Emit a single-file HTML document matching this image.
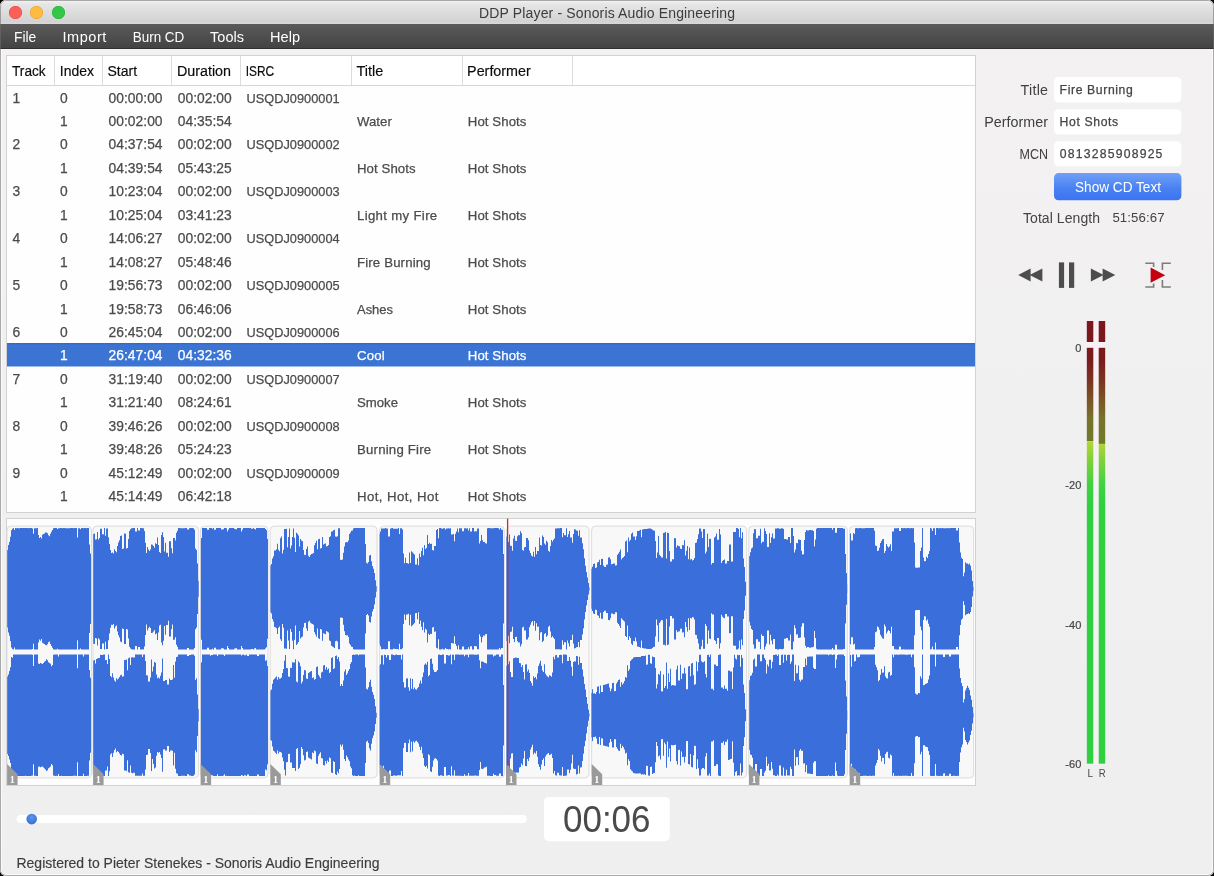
<!DOCTYPE html>
<html><head><meta charset="utf-8"><title>DDP Player - Sonoris Audio Engineering</title>
<style>
html,body{margin:0;padding:0;}
.abs{position:absolute;}
body{width:1214px;height:876px;overflow:hidden;background:#000;position:relative;font-family:"Liberation Sans",sans-serif;}
#win{position:absolute;left:0;top:0;width:1214px;height:876px;border-radius:6px;overflow:hidden;background:#f1efef;}
#txt{position:absolute;left:0;top:0;width:1214px;height:876px;will-change:transform;font-family:"Liberation Sans",sans-serif;}
#titlebar{left:0;top:0;width:1214px;height:24px;background:linear-gradient(#efefef 0,#efefef 2px,#e6e6e6 4px,#d2d2d2 22px,#dadada 23px,#d6d6d6 24px);}
#menubar{left:0;top:24px;width:1214px;height:25px;background:linear-gradient(#5b5b5b,#434343);border-bottom:1px solid #2f2f2f;box-sizing:border-box;}
.tl{width:13px;height:13px;border-radius:50%;top:6px;}
#content{left:0;top:49px;width:1214px;height:827px;background:linear-gradient(#f3f1f1,#f1f0f0 50%,#efeff0);}
#table{left:6px;top:55px;width:970px;height:458px;background:#fefefe;border:1px solid #d2d2d2;box-sizing:border-box;}
#thead{left:7px;top:56px;width:968px;height:30px;background:#fff;border-bottom:1px solid #d6d6d6;box-sizing:border-box;}
.csep{top:56px;width:1px;height:29px;background:#dcdcdc;}
#wavepanel{left:6px;top:518px;width:970px;height:268px;background:#fdfdfd;border:1px solid #d2d2d2;box-sizing:border-box;}
</style></head><body>
<div id="win">

<div class="abs" id="titlebar"></div>
<div class="abs tl" style="left:9px;background:#fc5f57;box-shadow:inset 0 0 0 0.5px #e2463f"></div>
<div class="abs tl" style="left:30.2px;background:#fdbc40;box-shadow:inset 0 0 0 0.5px #e0a033"></div>
<div class="abs tl" style="left:51.5px;background:#33c748;box-shadow:inset 0 0 0 0.5px #27aa35"></div>

<div class="abs" id="menubar"></div>





<div class="abs" id="content"></div>
<div class="abs" id="table"></div><div class="abs" id="thead"></div>
<div class="abs csep" style="left:54px"></div>
<div class="abs csep" style="left:102px"></div>
<div class="abs csep" style="left:171px"></div>
<div class="abs csep" style="left:240px"></div>
<div class="abs csep" style="left:351px"></div>
<div class="abs csep" style="left:461.5px"></div>
<div class="abs csep" style="left:572px"></div>







<svg class="abs" style="left:0;top:0" width="1214" height="876"><rect x="7" y="343.1" width="968" height="23.4" fill="#3b74d3"/><rect x="7" y="343.1" width="968" height="1.1" fill="#3266c8"/></svg>


























































































<div class="abs" id="wavepanel"></div>
<svg class="abs" style="left:0;top:0" width="1214" height="876" viewBox="0 0 1214 876">
<rect x="7.0" y="526.1" width="84.5" height="251.8" rx="4" fill="#f8f8f8" stroke="#dcdcdc" stroke-width="1"/>
<rect x="93.0" y="526.1" width="105.6" height="251.8" rx="4" fill="#f8f8f8" stroke="#dcdcdc" stroke-width="1"/>
<rect x="200.5" y="526.1" width="67.5" height="251.8" rx="4" fill="#f8f8f8" stroke="#dcdcdc" stroke-width="1"/>
<rect x="270.2" y="526.1" width="106.8" height="251.8" rx="4" fill="#f8f8f8" stroke="#dcdcdc" stroke-width="1"/>
<rect x="379.6" y="526.1" width="124.7" height="251.8" rx="4" fill="#f8f8f8" stroke="#dcdcdc" stroke-width="1"/>
<rect x="506.6" y="526.1" width="82.4" height="251.8" rx="4" fill="#f8f8f8" stroke="#dcdcdc" stroke-width="1"/>
<rect x="591.6" y="526.1" width="155.0" height="251.8" rx="4" fill="#f8f8f8" stroke="#dcdcdc" stroke-width="1"/>
<rect x="748.8" y="526.1" width="98.5" height="251.8" rx="4" fill="#f8f8f8" stroke="#dcdcdc" stroke-width="1"/>
<rect x="849.6" y="526.1" width="124.0" height="251.8" rx="4" fill="#f8f8f8" stroke="#dcdcdc" stroke-width="1"/>
<path fill="#396edb" d="M7.2 588.8V550.1H8.0V545.0H9.0V541.9H10.0V536.7H11.0V530.2H12.0V528.7H13.0V528.1H14.0V530.1H15.0V528.1H16.0V528.2H17.0V528.1H18.0V528.2H19.0V528.2H20.0V528.0H21.0V528.1H22.0V528.1H23.0V528.1H24.0V528.1H25.0V528.1H26.0V528.1H27.0V528.1H28.0V528.2H29.0V528.0H30.0V528.1H31.0V528.1H32.0V528.6H33.0V533.8H34.0V528.2H35.0V528.2H36.0V528.2H37.0V528.1H38.0V535.0H39.0V538.0H40.0V536.9H41.0V538.5H42.0V534.8H43.0V534.0H44.0V533.5H45.0V532.6H46.0V532.4H47.0V533.3H48.0V535.3H49.0V536.2H50.0V533.7H51.0V531.7H52.0V529.9H53.0V528.2H54.0V528.1H55.0V528.1H56.0V528.1H57.0V528.9H58.0V528.2H59.0V528.2H60.0V528.1H61.0V528.1H62.0V528.2H63.0V528.1H64.0V528.1H65.0V528.2H66.0V528.2H67.0V528.2H68.0V528.2H69.0V528.2H70.0V528.1H71.0V528.1H72.0V528.1H73.0V528.2H74.0V528.1H75.0V528.1H76.0V528.1H77.0V537.4H78.0V528.2H79.0V528.2H80.0V529.2H81.0V528.1H82.0V528.1H83.0V528.2H84.0V528.1H85.0V528.1H86.0V528.2H87.0V528.0H88.0V528.0H89.0V544.6H90.0V553.6H91.0V558.0H91.1V588.8V619.6H91.0V624.0H90.0V633.0H89.0V649.6H88.0V649.6H87.0V649.4H86.0V649.5H85.0V649.5H84.0V649.4H83.0V649.5H82.0V649.5H81.0V648.4H80.0V649.4H79.0V649.4H78.0V640.2H77.0V649.5H76.0V649.5H75.0V649.5H74.0V649.4H73.0V649.5H72.0V649.5H71.0V649.5H70.0V649.4H69.0V649.4H68.0V649.4H67.0V649.4H66.0V649.4H65.0V649.5H64.0V649.5H63.0V649.4H62.0V649.5H61.0V649.5H60.0V649.4H59.0V649.4H58.0V648.7H57.0V649.5H56.0V649.5H55.0V649.5H54.0V649.4H53.0V647.7H52.0V645.9H51.0V643.9H50.0V641.4H49.0V642.3H48.0V644.3H47.0V645.2H46.0V645.0H45.0V644.1H44.0V643.6H43.0V642.8H42.0V639.1H41.0V640.7H40.0V639.6H39.0V642.6H38.0V649.5H37.0V649.4H36.0V649.4H35.0V649.4H34.0V643.8H33.0V649.0H32.0V649.5H31.0V649.5H30.0V649.6H29.0V649.4H28.0V649.5H27.0V649.5H26.0V649.5H25.0V649.5H24.0V649.5H23.0V649.5H22.0V649.5H21.0V649.6H20.0V649.4H19.0V649.4H18.0V649.5H17.0V649.4H16.0V649.5H15.0V647.5H14.0V649.5H13.0V648.9H12.0V647.4H11.0V640.9H10.0V635.7H9.0V632.6H8.0V627.5H7.2ZM93.2 588.8V533.9H94.0V533.5H95.0V539.5H96.0V539.2H97.0V532.1H98.0V539.4H99.0V538.0H100.0V528.7H101.0V528.7H102.0V534.2H103.0V534.2H104.0V528.1H105.0V535.8H106.0V528.6H107.0V528.6H108.0V537.3H109.0V544.1H110.0V549.9H111.0V552.9H112.0V552.5H113.0V553.6H114.0V549.2H115.0V551.0H116.0V552.2H117.0V546.0H118.0V542.4H119.0V540.2H120.0V536.0H121.0V535.4H122.0V549.1H123.0V548.6H124.0V533.6H125.0V533.7H126.0V548.6H127.0V548.1H128.0V539.1H129.0V530.9H130.0V529.2H131.0V528.3H132.0V528.2H133.0V528.1H134.0V528.1H135.0V531.6H136.0V531.6H137.0V528.1H138.0V530.5H139.0V530.5H140.0V528.1H141.0V528.1H142.0V528.3H143.0V528.2H144.0V531.1H145.0V542.7H146.0V553.0H147.0V547.0H148.0V549.4H149.0V550.9H150.0V549.6H151.0V544.5H152.0V544.8H153.0V546.1H154.0V547.7H155.0V543.3H156.0V544.1H157.0V537.6H158.0V545.0H159.0V552.1H160.0V552.9H161.0V535.1H162.0V532.3H163.0V536.9H164.0V551.6H165.0V542.8H166.0V552.7H167.0V552.7H168.0V556.8H169.0V541.2H170.0V541.2H171.0V548.3H172.0V553.2H173.0V537.9H174.0V537.9H175.0V540.4H176.0V532.8H177.0V530.8H178.0V528.1H179.0V528.1H180.0V528.2H181.0V528.2H182.0V528.2H183.0V528.2H184.0V528.2H185.0V528.1H186.0V528.1H187.0V529.6H188.0V529.6H189.0V528.2H190.0V528.1H191.0V528.1H192.0V528.1H193.0V528.2H194.0V529.7H195.0V548.4H196.0V550.0H197.0V563.6H198.0V580.7H198.7V588.8V596.9H198.0V614.0H197.0V627.6H196.0V629.2H195.0V647.9H194.0V649.4H193.0V649.5H192.0V649.5H191.0V649.5H190.0V649.4H189.0V648.0H188.0V648.0H187.0V649.5H186.0V649.5H185.0V649.4H184.0V649.4H183.0V649.4H182.0V649.4H181.0V649.4H180.0V649.5H179.0V649.5H178.0V646.8H177.0V644.8H176.0V637.2H175.0V639.7H174.0V639.7H173.0V624.4H172.0V629.3H171.0V636.4H170.0V636.4H169.0V620.8H168.0V624.9H167.0V624.9H166.0V634.8H165.0V626.0H164.0V640.7H163.0V645.3H162.0V642.5H161.0V624.7H160.0V625.5H159.0V632.6H158.0V640.0H157.0V633.5H156.0V634.3H155.0V629.9H154.0V631.5H153.0V632.8H152.0V633.1H151.0V628.0H150.0V626.7H149.0V628.2H148.0V630.6H147.0V624.6H146.0V634.9H145.0V646.5H144.0V649.4H143.0V649.3H142.0V649.5H141.0V649.5H140.0V647.1H139.0V647.1H138.0V649.5H137.0V646.0H136.0V646.0H135.0V649.5H134.0V649.5H133.0V649.4H132.0V649.3H131.0V648.4H130.0V646.7H129.0V638.5H128.0V629.5H127.0V629.0H126.0V643.9H125.0V644.0H124.0V629.0H123.0V628.5H122.0V642.2H121.0V641.6H120.0V637.4H119.0V635.2H118.0V631.6H117.0V625.4H116.0V626.6H115.0V628.4H114.0V624.0H113.0V625.1H112.0V624.7H111.0V627.7H110.0V633.5H109.0V640.3H108.0V649.0H107.0V649.0H106.0V641.8H105.0V649.5H104.0V643.4H103.0V643.4H102.0V648.9H101.0V648.9H100.0V639.6H99.0V638.2H98.0V645.5H97.0V638.4H96.0V638.1H95.0V644.1H94.0V643.7H93.2ZM200.9 588.8V540.4H201.0V537.9H202.0V528.0H203.0V528.0H204.0V528.1H205.0V528.1H206.0V528.1H207.0V529.8H208.0V529.8H209.0V528.0H210.0V528.1H211.0V528.1H212.0V528.8H213.0V528.1H214.0V529.8H215.0V529.8H216.0V528.1H217.0V528.1H218.0V528.1H219.0V528.1H220.0V528.1H221.0V529.4H222.0V529.4H223.0V529.2H224.0V528.0H225.0V528.1H226.0V528.2H227.0V531.5H228.0V529.5H229.0V528.1H230.0V528.1H231.0V528.0H232.0V528.0H233.0V528.1H234.0V528.8H235.0V529.3H236.0V529.3H237.0V528.1H238.0V528.1H239.0V528.0H240.0V528.0H241.0V531.6H242.0V529.6H243.0V528.1H244.0V528.1H245.0V528.1H246.0V528.1H247.0V528.1H248.0V528.0H249.0V528.0H250.0V528.0H251.0V528.7H252.0V528.7H253.0V528.1H254.0V529.0H255.0V529.5H256.0V528.1H257.0V528.1H258.0V528.1H259.0V528.1H260.0V528.1H261.0V528.1H262.0V528.1H263.0V528.1H264.0V528.1H265.0V529.0H266.0V530.3H267.0V538.9H268.0V588.8V638.7H267.0V647.3H266.0V648.6H265.0V649.5H264.0V649.5H263.0V649.5H262.0V649.5H261.0V649.5H260.0V649.5H259.0V649.5H258.0V649.5H257.0V649.5H256.0V648.1H255.0V648.6H254.0V649.5H253.0V648.9H252.0V648.9H251.0V649.6H250.0V649.6H249.0V649.6H248.0V649.5H247.0V649.5H246.0V649.5H245.0V649.5H244.0V649.5H243.0V648.0H242.0V646.0H241.0V649.6H240.0V649.6H239.0V649.5H238.0V649.5H237.0V648.3H236.0V648.3H235.0V648.8H234.0V649.5H233.0V649.6H232.0V649.6H231.0V649.5H230.0V649.5H229.0V648.1H228.0V646.1H227.0V649.4H226.0V649.5H225.0V649.6H224.0V648.4H223.0V648.2H222.0V648.2H221.0V649.5H220.0V649.5H219.0V649.5H218.0V649.5H217.0V649.5H216.0V647.8H215.0V647.8H214.0V649.5H213.0V648.8H212.0V649.5H211.0V649.5H210.0V649.6H209.0V647.8H208.0V647.8H207.0V649.5H206.0V649.5H205.0V649.5H204.0V649.6H203.0V649.6H202.0V639.7H201.0V637.2H200.9ZM270.4 588.8V565.4H271.0V564.0H272.0V558.6H273.0V556.2H274.0V550.5H275.0V550.4H276.0V549.3H277.0V543.7H278.0V549.8H279.0V551.2H280.0V538.3H281.0V536.5H282.0V553.6H283.0V549.8H284.0V529.1H285.0V529.1H286.0V528.8H287.0V547.2H288.0V537.0H289.0V528.6H290.0V548.6H291.0V545.6H292.0V536.9H293.0V528.4H294.0V537.8H295.0V552.0H296.0V532.7H297.0V533.8H298.0V535.5H299.0V546.5H300.0V539.1H301.0V540.4H302.0V541.2H303.0V550.1H304.0V554.7H305.0V554.9H306.0V549.1H307.0V546.6H308.0V555.8H309.0V556.9H310.0V554.9H311.0V554.1H312.0V553.7H313.0V552.9H314.0V545.3H315.0V543.1H316.0V540.8H317.0V549.2H318.0V539.3H319.0V538.7H320.0V548.6H321.0V548.0H322.0V536.9H323.0V544.4H324.0V543.8H325.0V543.4H326.0V546.6H327.0V545.9H328.0V545.1H329.0V537.0H330.0V536.3H331.0V531.8H332.0V531.2H333.0V530.3H334.0V529.7H335.0V536.4H336.0V536.8H337.0V536.2H338.0V528.3H339.0V528.3H340.0V559.8H341.0V560.0H342.0V559.5H343.0V552.8H344.0V546.4H345.0V542.6H346.0V542.1H347.0V542.3H348.0V540.5H349.0V534.0H350.0V532.6H351.0V530.8H352.0V530.5H353.0V528.4H354.0V528.1H355.0V528.1H356.0V528.1H357.0V528.1H358.0V528.1H359.0V528.1H360.0V528.1H361.0V528.1H362.0V528.1H363.0V528.0H364.0V528.0H365.0V544.1H366.0V562.7H367.0V563.5H368.0V562.1H369.0V555.6H370.0V555.0H371.0V561.2H372.0V566.0H373.0V568.7H374.0V573.1H375.0V580.2H376.0V585.9H376.7V588.8V591.7H376.0V597.4H375.0V604.5H374.0V608.9H373.0V611.6H372.0V616.4H371.0V622.6H370.0V622.0H369.0V615.5H368.0V614.1H367.0V614.9H366.0V633.5H365.0V649.6H364.0V649.6H363.0V649.5H362.0V649.5H361.0V649.5H360.0V649.5H359.0V649.5H358.0V649.5H357.0V649.5H356.0V649.5H355.0V649.5H354.0V649.2H353.0V647.1H352.0V646.8H351.0V645.0H350.0V643.6H349.0V637.1H348.0V635.3H347.0V635.5H346.0V635.0H345.0V631.2H344.0V624.8H343.0V618.1H342.0V617.6H341.0V617.8H340.0V649.3H339.0V649.3H338.0V641.4H337.0V640.8H336.0V641.2H335.0V647.9H334.0V647.3H333.0V646.4H332.0V645.8H331.0V641.3H330.0V640.6H329.0V632.5H328.0V631.7H327.0V631.0H326.0V634.2H325.0V633.8H324.0V633.2H323.0V640.7H322.0V629.6H321.0V629.0H320.0V638.9H319.0V638.3H318.0V628.4H317.0V636.8H316.0V634.5H315.0V632.3H314.0V624.7H313.0V623.9H312.0V623.5H311.0V622.7H310.0V620.7H309.0V621.8H308.0V631.0H307.0V628.5H306.0V622.7H305.0V622.9H304.0V627.5H303.0V636.4H302.0V637.2H301.0V638.5H300.0V631.1H299.0V642.1H298.0V643.8H297.0V644.9H296.0V625.6H295.0V639.8H294.0V649.2H293.0V640.7H292.0V632.0H291.0V629.0H290.0V649.0H289.0V640.6H288.0V630.4H287.0V648.8H286.0V648.5H285.0V648.5H284.0V627.8H283.0V624.0H282.0V641.1H281.0V639.3H280.0V626.4H279.0V627.8H278.0V633.9H277.0V628.3H276.0V627.2H275.0V627.1H274.0V621.4H273.0V619.0H272.0V613.6H271.0V612.2H270.4ZM379.6 588.8V533.9H380.0V531.4H381.0V528.4H382.0V528.4H383.0V528.5H384.0V528.5H385.0V528.1H386.0V528.6H387.0V528.6H388.0V536.4H389.0V536.4H390.0V528.4H391.0V528.2H392.0V528.1H393.0V528.8H394.0V528.8H395.0V528.7H396.0V528.7H397.0V528.7H398.0V528.0H399.0V533.9H400.0V528.3H401.0V528.3H402.0V529.4H403.0V553.6H404.0V563.2H405.0V557.7H406.0V563.0H407.0V563.2H408.0V563.8H409.0V552.4H410.0V562.9H411.0V551.3H412.0V552.3H413.0V553.4H414.0V554.5H415.0V564.4H416.0V564.5H417.0V558.3H418.0V565.3H419.0V553.5H420.0V557.1H421.0V550.9H422.0V547.7H423.0V555.3H424.0V545.1H425.0V548.9H426.0V547.8H427.0V535.1H428.0V543.9H429.0V542.7H430.0V543.9H431.0V543.7H432.0V550.1H433.0V550.5H434.0V545.9H435.0V546.1H436.0V529.9H437.0V529.0H438.0V538.3H439.0V528.1H440.0V528.1H441.0V528.4H442.0V528.8H443.0V528.2H444.0V528.2H445.0V529.6H446.0V528.5H447.0V528.5H448.0V528.2H449.0V528.6H450.0V528.2H451.0V534.5H452.0V534.4H453.0V534.1H454.0V541.3H455.0V533.7H456.0V531.6H457.0V528.4H458.0V532.3H459.0V528.2H460.0V528.2H461.0V528.2H462.0V531.2H463.0V531.2H464.0V528.2H465.0V528.2H466.0V528.4H467.0V528.3H468.0V530.4H469.0V528.3H470.0V531.4H471.0V531.4H472.0V528.0H473.0V528.0H474.0V531.5H475.0V531.3H476.0V531.3H477.0V528.4H478.0V528.4H479.0V543.4H480.0V541.1H481.0V535.1H482.0V540.3H483.0V542.0H484.0V541.9H485.0V543.3H486.0V543.6H487.0V528.2H488.0V528.1H489.0V528.0H490.0V528.2H491.0V528.2H492.0V528.2H493.0V528.2H494.0V528.0H495.0V528.0H496.0V528.1H497.0V528.0H498.0V528.2H499.0V529.6H500.0V528.1H501.0V529.7H502.0V529.7H503.0V554.0H504.0V588.8V623.6H503.0V647.9H502.0V647.9H501.0V649.5H500.0V648.0H499.0V649.4H498.0V649.6H497.0V649.5H496.0V649.6H495.0V649.6H494.0V649.4H493.0V649.4H492.0V649.4H491.0V649.4H490.0V649.6H489.0V649.5H488.0V649.4H487.0V634.0H486.0V634.3H485.0V635.7H484.0V635.6H483.0V637.3H482.0V642.5H481.0V636.5H480.0V634.2H479.0V649.2H478.0V649.2H477.0V646.3H476.0V646.3H475.0V646.1H474.0V649.6H473.0V649.6H472.0V646.2H471.0V646.2H470.0V649.3H469.0V647.2H468.0V649.3H467.0V649.2H466.0V649.4H465.0V649.4H464.0V646.4H463.0V646.4H462.0V649.4H461.0V649.4H460.0V649.4H459.0V645.3H458.0V649.2H457.0V646.0H456.0V643.9H455.0V636.3H454.0V643.5H453.0V643.2H452.0V643.1H451.0V649.4H450.0V649.0H449.0V649.4H448.0V649.1H447.0V649.1H446.0V648.0H445.0V649.4H444.0V649.4H443.0V648.8H442.0V649.2H441.0V649.5H440.0V649.5H439.0V639.3H438.0V648.6H437.0V647.7H436.0V631.5H435.0V631.7H434.0V627.1H433.0V627.5H432.0V633.9H431.0V633.7H430.0V634.9H429.0V633.7H428.0V642.5H427.0V629.8H426.0V628.7H425.0V632.5H424.0V622.3H423.0V629.9H422.0V626.7H421.0V620.5H420.0V624.1H419.0V612.3H418.0V619.3H417.0V613.1H416.0V613.2H415.0V623.1H414.0V624.2H413.0V625.3H412.0V626.3H411.0V614.7H410.0V625.2H409.0V613.8H408.0V614.4H407.0V614.6H406.0V619.9H405.0V614.4H404.0V624.0H403.0V648.2H402.0V649.3H401.0V649.3H400.0V643.7H399.0V649.6H398.0V648.9H397.0V648.9H396.0V648.9H395.0V648.8H394.0V648.8H393.0V649.5H392.0V649.4H391.0V649.2H390.0V641.2H389.0V641.2H388.0V649.0H387.0V649.0H386.0V649.5H385.0V649.1H384.0V649.1H383.0V649.2H382.0V649.2H381.0V646.2H380.0V643.7H379.6ZM506.4 588.8V536.5H507.0V537.2H508.0V541.9H509.0V534.4H510.0V545.6H511.0V546.1H512.0V550.8H513.0V538.5H514.0V535.7H515.0V540.7H516.0V540.9H517.0V536.3H518.0V535.1H519.0V535.2H520.0V531.2H521.0V533.3H522.0V550.1H523.0V550.8H524.0V547.2H525.0V547.0H526.0V538.1H527.0V538.0H528.0V540.3H529.0V550.4H530.0V552.9H531.0V555.4H532.0V556.5H533.0V551.8H534.0V556.7H535.0V546.9H536.0V554.3H537.0V550.9H538.0V551.0H539.0V537.4H540.0V545.1H541.0V545.5H542.0V535.6H543.0V536.9H544.0V543.5H545.0V544.7H546.0V540.8H547.0V542.2H548.0V550.8H549.0V551.8H550.0V546.1H551.0V540.1H552.0V541.4H553.0V539.8H554.0V538.6H555.0V528.4H556.0V528.4H557.0V528.3H558.0V528.3H559.0V528.3H560.0V528.1H561.0V528.1H562.0V537.3H563.0V532.9H564.0V535.3H565.0V535.3H566.0V528.2H567.0V537.1H568.0V534.3H569.0V531.1H570.0V537.5H571.0V537.5H572.0V542.8H573.0V533.9H574.0V529.2H575.0V529.5H576.0V530.4H577.0V530.7H578.0V535.7H579.0V530.3H580.0V537.5H581.0V537.6H582.0V543.2H583.0V549.3H584.0V558.2H585.0V565.7H586.0V572.1H587.0V577.6H588.0V583.0H589.0V587.2H589.5V588.8V590.4H589.0V594.6H588.0V600.0H587.0V605.5H586.0V611.9H585.0V619.4H584.0V628.3H583.0V634.4H582.0V640.0H581.0V640.1H580.0V647.3H579.0V641.9H578.0V646.9H577.0V647.2H576.0V648.1H575.0V648.4H574.0V643.7H573.0V634.8H572.0V640.1H571.0V640.1H570.0V646.5H569.0V643.3H568.0V640.5H567.0V649.4H566.0V642.3H565.0V642.3H564.0V644.7H563.0V640.3H562.0V649.5H561.0V649.5H560.0V649.3H559.0V649.3H558.0V649.3H557.0V649.2H556.0V649.2H555.0V639.0H554.0V637.8H553.0V636.2H552.0V637.5H551.0V631.5H550.0V625.8H549.0V626.8H548.0V635.4H547.0V636.8H546.0V632.9H545.0V634.1H544.0V640.7H543.0V642.0H542.0V632.1H541.0V632.5H540.0V640.2H539.0V626.6H538.0V626.7H537.0V623.3H536.0V630.7H535.0V620.9H534.0V625.8H533.0V621.1H532.0V622.2H531.0V624.7H530.0V627.2H529.0V637.3H528.0V639.6H527.0V639.5H526.0V630.6H525.0V630.4H524.0V626.8H523.0V627.5H522.0V644.3H521.0V646.4H520.0V642.4H519.0V642.5H518.0V641.3H517.0V636.7H516.0V636.9H515.0V641.9H514.0V639.1H513.0V626.8H512.0V631.5H511.0V632.0H510.0V643.2H509.0V635.7H508.0V640.4H507.0V641.1H506.4ZM591.4 588.8V568.8H592.0V566.7H593.0V564.1H594.0V563.6H595.0V567.9H596.0V567.6H597.0V562.4H598.0V561.9H599.0V559.7H600.0V564.9H601.0V558.9H602.0V558.8H603.0V565.5H604.0V566.8H605.0V566.9H606.0V564.7H607.0V564.5H608.0V557.5H609.0V557.3H610.0V559.3H611.0V564.2H612.0V564.0H613.0V563.4H614.0V563.5H615.0V565.4H616.0V565.3H617.0V554.8H618.0V553.5H619.0V551.8H620.0V549.5H621.0V559.4H622.0V558.1H623.0V557.2H624.0V556.0H625.0V541.6H626.0V540.5H627.0V552.2H628.0V537.5H629.0V541.3H630.0V539.7H631.0V533.8H632.0V532.5H633.0V536.6H634.0V536.4H635.0V540.0H636.0V536.2H637.0V531.1H638.0V530.9H639.0V530.5H640.0V529.8H641.0V537.2H642.0V529.5H643.0V529.3H644.0V529.1H645.0V529.0H646.0V528.9H647.0V528.7H648.0V528.6H649.0V528.5H650.0V528.5H651.0V528.9H652.0V529.7H653.0V530.5H654.0V530.8H655.0V541.0H656.0V558.0H657.0V552.4H658.0V535.9H659.0V554.7H660.0V556.0H661.0V557.6H662.0V557.4H663.0V532.9H664.0V532.8H665.0V532.1H666.0V558.6H667.0V532.7H668.0V533.0H669.0V551.1H670.0V561.5H671.0V561.6H672.0V559.2H673.0V559.3H674.0V538.0H675.0V538.2H676.0V547.4H677.0V545.3H678.0V546.1H679.0V546.3H680.0V548.8H681.0V548.9H682.0V545.1H683.0V545.3H684.0V540.3H685.0V555.5H686.0V550.7H687.0V546.0H688.0V559.3H689.0V547.6H690.0V559.6H691.0V559.1H692.0V560.5H693.0V560.1H694.0V558.0H695.0V542.9H696.0V542.5H697.0V538.9H698.0V534.2H699.0V528.4H700.0V528.4H701.0V531.4H702.0V537.9H703.0V528.9H704.0V528.9H705.0V553.5H706.0V551.6H707.0V533.8H708.0V547.1H709.0V539.1H710.0V538.7H711.0V564.4H712.0V563.1H713.0V563.1H714.0V537.5H715.0V536.6H716.0V533.6H717.0V539.7H718.0V539.7H719.0V529.0H720.0V534.4H721.0V562.9H722.0V560.9H723.0V559.9H724.0V559.4H725.0V563.6H726.0V563.6H727.0V561.0H728.0V561.1H729.0V544.4H730.0V544.6H731.0V561.4H732.0V561.4H733.0V532.0H734.0V531.9H735.0V531.9H736.0V528.1H737.0V528.1H738.0V529.0H739.0V537.2H740.0V528.0H741.0V538.2H742.0V532.3H743.0V558.6H744.0V567.1H745.0V581.8H746.0V588.8V595.8H745.0V610.5H744.0V619.0H743.0V645.3H742.0V639.4H741.0V649.6H740.0V640.4H739.0V648.6H738.0V649.5H737.0V649.5H736.0V645.7H735.0V645.7H734.0V645.6H733.0V616.2H732.0V616.2H731.0V633.0H730.0V633.2H729.0V616.5H728.0V616.6H727.0V614.0H726.0V614.0H725.0V618.2H724.0V617.7H723.0V616.7H722.0V614.7H721.0V643.2H720.0V648.6H719.0V637.9H718.0V637.9H717.0V644.0H716.0V641.0H715.0V640.1H714.0V614.5H713.0V614.5H712.0V613.2H711.0V638.9H710.0V638.5H709.0V630.5H708.0V643.8H707.0V626.0H706.0V624.1H705.0V648.7H704.0V648.7H703.0V639.7H702.0V646.2H701.0V649.2H700.0V649.2H699.0V643.4H698.0V638.7H697.0V635.1H696.0V634.7H695.0V619.6H694.0V617.5H693.0V617.1H692.0V618.5H691.0V618.0H690.0V630.0H689.0V618.3H688.0V631.6H687.0V626.9H686.0V622.1H685.0V637.3H684.0V632.3H683.0V632.5H682.0V628.7H681.0V628.8H680.0V631.3H679.0V631.5H678.0V632.3H677.0V630.2H676.0V639.4H675.0V639.6H674.0V618.3H673.0V618.4H672.0V616.0H671.0V616.1H670.0V626.5H669.0V644.6H668.0V644.9H667.0V619.0H666.0V645.5H665.0V644.8H664.0V644.7H663.0V620.2H662.0V620.0H661.0V621.6H660.0V622.9H659.0V641.7H658.0V625.2H657.0V619.6H656.0V636.6H655.0V646.8H654.0V647.1H653.0V647.9H652.0V648.7H651.0V649.1H650.0V649.1H649.0V649.0H648.0V648.9H647.0V648.7H646.0V648.6H645.0V648.5H644.0V648.3H643.0V648.1H642.0V640.4H641.0V647.8H640.0V647.1H639.0V646.7H638.0V646.5H637.0V641.4H636.0V637.6H635.0V641.2H634.0V641.0H633.0V645.1H632.0V643.8H631.0V637.9H630.0V636.3H629.0V640.1H628.0V625.4H627.0V637.1H626.0V636.0H625.0V621.6H624.0V620.4H623.0V619.5H622.0V618.2H621.0V628.1H620.0V625.8H619.0V624.1H618.0V622.8H617.0V612.3H616.0V612.2H615.0V614.1H614.0V614.2H613.0V613.6H612.0V613.4H611.0V618.3H610.0V620.3H609.0V620.1H608.0V613.1H607.0V612.9H606.0V610.7H605.0V610.8H604.0V612.1H603.0V618.8H602.0V618.7H601.0V612.7H600.0V617.9H599.0V615.7H598.0V615.2H597.0V610.0H596.0V609.7H595.0V614.0H594.0V613.5H593.0V610.9H592.0V608.8H591.4ZM749.2 588.8V555.9H750.0V552.2H751.0V548.6H752.0V547.5H753.0V533.2H754.0V528.9H755.0V529.2H756.0V538.3H757.0V538.3H758.0V535.8H759.0V535.8H760.0V528.7H761.0V543.3H762.0V541.7H763.0V541.7H764.0V528.2H765.0V531.0H766.0V533.9H767.0V547.0H768.0V547.0H769.0V533.2H770.0V542.9H771.0V537.2H772.0V533.4H773.0V538.5H774.0V538.5H775.0V528.5H776.0V528.5H777.0V528.2H778.0V528.2H779.0V528.7H780.0V528.7H781.0V528.3H782.0V528.3H783.0V528.9H784.0V538.9H785.0V538.9H786.0V539.5H787.0V539.5H788.0V537.1H789.0V537.1H790.0V543.0H791.0V528.1H792.0V528.1H793.0V535.9H794.0V552.4H795.0V549.4H796.0V543.1H797.0V543.3H798.0V539.6H799.0V539.8H800.0V540.1H801.0V550.8H802.0V554.4H803.0V554.3H804.0V540.1H805.0V531.9H806.0V529.9H807.0V530.5H808.0V530.5H809.0V529.9H810.0V529.9H811.0V530.3H812.0V530.3H813.0V530.9H814.0V546.6H815.0V539.5H816.0V528.8H817.0V528.1H818.0V528.1H819.0V528.1H820.0V528.1H821.0V528.0H822.0V528.1H823.0V528.1H824.0V528.0H825.0V528.1H826.0V528.0H827.0V528.0H828.0V528.1H829.0V528.1H830.0V528.1H831.0V528.1H832.0V529.7H833.0V528.1H834.0V528.1H835.0V532.8H836.0V532.8H837.0V528.1H838.0V528.1H839.0V528.1H840.0V528.0H841.0V528.1H842.0V528.1H843.0V528.7H844.0V528.7H845.0V554.1H846.0V572.9H847.0V584.5H847.2V588.8V593.1H847.0V604.7H846.0V623.5H845.0V648.9H844.0V648.9H843.0V649.5H842.0V649.5H841.0V649.6H840.0V649.5H839.0V649.5H838.0V649.5H837.0V644.8H836.0V644.8H835.0V649.5H834.0V649.5H833.0V647.9H832.0V649.5H831.0V649.5H830.0V649.5H829.0V649.5H828.0V649.6H827.0V649.6H826.0V649.5H825.0V649.6H824.0V649.5H823.0V649.5H822.0V649.6H821.0V649.5H820.0V649.5H819.0V649.5H818.0V649.5H817.0V648.8H816.0V638.1H815.0V631.0H814.0V646.7H813.0V647.3H812.0V647.3H811.0V647.7H810.0V647.7H809.0V647.1H808.0V647.1H807.0V647.7H806.0V645.7H805.0V637.5H804.0V623.3H803.0V623.2H802.0V626.8H801.0V637.5H800.0V637.8H799.0V638.0H798.0V634.3H797.0V634.5H796.0V628.2H795.0V625.2H794.0V641.7H793.0V649.5H792.0V649.5H791.0V634.6H790.0V640.5H789.0V640.5H788.0V638.1H787.0V638.1H786.0V638.7H785.0V638.7H784.0V648.7H783.0V649.3H782.0V649.3H781.0V648.9H780.0V648.9H779.0V649.4H778.0V649.4H777.0V649.1H776.0V649.1H775.0V639.1H774.0V639.1H773.0V644.2H772.0V640.4H771.0V634.7H770.0V644.4H769.0V630.6H768.0V630.6H767.0V643.7H766.0V646.6H765.0V649.4H764.0V635.9H763.0V635.9H762.0V634.3H761.0V648.9H760.0V641.8H759.0V641.8H758.0V639.3H757.0V639.3H756.0V648.4H755.0V648.7H754.0V644.4H753.0V630.1H752.0V629.0H751.0V625.4H750.0V621.7H749.2ZM849.9 588.8V533.4H850.0V533.4H851.0V540.4H852.0V540.4H853.0V533.1H854.0V533.9H855.0V528.2H856.0V528.1H857.0V528.2H858.0V528.2H859.0V528.1H860.0V528.1H861.0V528.2H862.0V528.2H863.0V528.2H864.0V528.2H865.0V528.1H866.0V528.1H867.0V528.1H868.0V528.1H869.0V528.1H870.0V528.1H871.0V528.1H872.0V528.1H873.0V528.1H874.0V530.7H875.0V545.4H876.0V546.0H877.0V551.1H878.0V550.4H879.0V547.8H880.0V542.9H881.0V541.0H882.0V539.3H883.0V538.9H884.0V553.0H885.0V551.1H886.0V544.0H887.0V546.2H888.0V547.5H889.0V546.6H890.0V544.3H891.0V550.9H892.0V531.5H893.0V531.5H894.0V528.3H895.0V528.3H896.0V528.2H897.0V528.2H898.0V528.1H899.0V531.0H900.0V530.9H901.0V528.1H902.0V528.1H903.0V528.3H904.0V528.1H905.0V528.2H906.0V528.2H907.0V528.1H908.0V528.1H909.0V528.2H910.0V528.2H911.0V528.0H912.0V528.2H913.0V528.1H914.0V542.4H915.0V567.4H916.0V567.7H917.0V567.7H918.0V567.6H919.0V567.6H920.0V551.0H921.0V547.4H922.0V528.0H923.0V557.6H924.0V561.3H925.0V561.1H926.0V556.8H927.0V558.1H928.0V553.9H929.0V550.9H930.0V528.0H931.0V528.6H932.0V531.0H933.0V528.2H934.0V528.2H935.0V535.0H936.0V528.1H937.0V528.1H938.0V528.2H939.0V528.2H940.0V528.1H941.0V528.2H942.0V528.1H943.0V528.2H944.0V528.2H945.0V528.2H946.0V528.2H947.0V528.1H948.0V528.2H949.0V528.2H950.0V528.1H951.0V528.1H952.0V528.1H953.0V528.1H954.0V528.1H955.0V528.1H956.0V530.6H957.0V530.6H958.0V528.1H959.0V542.4H960.0V552.6H961.0V557.8H962.0V559.1H963.0V576.3H964.0V572.5H965.0V562.3H966.0V563.4H967.0V563.5H968.0V564.4H969.0V563.6H970.0V565.7H971.0V570.5H972.0V581.0H973.0V586.7H973.5V588.8V590.9H973.0V596.6H972.0V607.1H971.0V611.9H970.0V614.0H969.0V613.2H968.0V614.1H967.0V614.2H966.0V615.3H965.0V605.1H964.0V601.3H963.0V618.5H962.0V619.8H961.0V625.0H960.0V635.2H959.0V649.5H958.0V647.0H957.0V647.0H956.0V649.5H955.0V649.5H954.0V649.5H953.0V649.5H952.0V649.5H951.0V649.5H950.0V649.4H949.0V649.4H948.0V649.5H947.0V649.4H946.0V649.4H945.0V649.4H944.0V649.4H943.0V649.5H942.0V649.4H941.0V649.5H940.0V649.4H939.0V649.4H938.0V649.5H937.0V649.5H936.0V642.6H935.0V649.4H934.0V649.4H933.0V646.6H932.0V649.0H931.0V649.6H930.0V626.7H929.0V623.7H928.0V619.5H927.0V620.8H926.0V616.5H925.0V616.3H924.0V620.0H923.0V649.6H922.0V630.2H921.0V626.6H920.0V610.0H919.0V610.0H918.0V609.9H917.0V609.9H916.0V610.2H915.0V635.2H914.0V649.5H913.0V649.4H912.0V649.6H911.0V649.4H910.0V649.4H909.0V649.5H908.0V649.5H907.0V649.4H906.0V649.4H905.0V649.5H904.0V649.3H903.0V649.5H902.0V649.5H901.0V646.7H900.0V646.6H899.0V649.5H898.0V649.4H897.0V649.4H896.0V649.3H895.0V649.3H894.0V646.1H893.0V646.1H892.0V626.7H891.0V633.3H890.0V631.0H889.0V630.1H888.0V631.4H887.0V633.6H886.0V626.5H885.0V624.6H884.0V638.7H883.0V638.3H882.0V636.6H881.0V634.7H880.0V629.8H879.0V627.2H878.0V626.5H877.0V631.6H876.0V632.2H875.0V646.9H874.0V649.5H873.0V649.5H872.0V649.5H871.0V649.5H870.0V649.5H869.0V649.5H868.0V649.5H867.0V649.5H866.0V649.5H865.0V649.4H864.0V649.4H863.0V649.4H862.0V649.4H861.0V649.5H860.0V649.5H859.0V649.4H858.0V649.4H857.0V649.5H856.0V649.4H855.0V643.7H854.0V644.5H853.0V637.2H852.0V637.2H851.0V644.2H850.0V644.2H849.9Z"/>
<path fill="#396edb" d="M7.2 715.2V676.4H8.0V674.5H9.0V670.9H10.0V667.3H11.0V656.9H12.0V657.8H13.0V654.4H14.0V654.6H15.0V654.6H16.0V654.5H17.0V654.5H18.0V654.4H19.0V654.4H20.0V654.5H21.0V654.5H22.0V654.5H23.0V654.4H24.0V654.4H25.0V654.6H26.0V654.5H27.0V654.4H28.0V654.4H29.0V654.5H30.0V654.5H31.0V654.6H32.0V654.8H33.0V666.1H34.0V654.6H35.0V654.6H36.0V654.5H37.0V654.5H38.0V663.6H39.0V664.0H40.0V663.1H41.0V663.6H42.0V664.0H43.0V663.0H44.0V661.8H45.0V661.0H46.0V659.3H47.0V660.2H48.0V662.2H49.0V663.0H50.0V663.8H51.0V666.3H52.0V665.1H53.0V654.8H54.0V654.6H55.0V654.4H56.0V654.6H57.0V654.5H58.0V656.4H59.0V654.5H60.0V654.5H61.0V654.6H62.0V654.5H63.0V654.5H64.0V654.5H65.0V654.5H66.0V654.5H67.0V654.5H68.0V654.4H69.0V654.4H70.0V654.5H71.0V654.4H72.0V654.4H73.0V654.6H74.0V654.6H75.0V654.6H76.0V654.5H77.0V668.2H78.0V654.4H79.0V654.5H80.0V654.5H81.0V654.5H82.0V654.5H83.0V656.6H84.0V654.5H85.0V654.5H86.0V654.5H87.0V654.6H88.0V654.6H89.0V670.0H90.0V677.7H91.0V680.1H91.1V715.2V750.3H91.0V752.7H90.0V760.4H89.0V775.8H88.0V775.8H87.0V775.9H86.0V775.9H85.0V775.9H84.0V773.8H83.0V775.9H82.0V775.9H81.0V775.9H80.0V775.9H79.0V776.0H78.0V762.2H77.0V775.9H76.0V775.8H75.0V775.8H74.0V775.8H73.0V776.0H72.0V776.0H71.0V775.9H70.0V776.0H69.0V776.0H68.0V775.9H67.0V775.9H66.0V775.9H65.0V775.9H64.0V775.9H63.0V775.9H62.0V775.8H61.0V775.9H60.0V775.9H59.0V774.0H58.0V775.9H57.0V775.8H56.0V776.0H55.0V775.8H54.0V775.6H53.0V765.3H52.0V764.1H51.0V766.6H50.0V767.4H49.0V768.2H48.0V770.2H47.0V771.1H46.0V769.4H45.0V768.6H44.0V767.4H43.0V766.4H42.0V766.8H41.0V767.3H40.0V766.4H39.0V766.8H38.0V775.9H37.0V775.9H36.0V775.8H35.0V775.8H34.0V764.3H33.0V775.6H32.0V775.8H31.0V775.9H30.0V775.9H29.0V776.0H28.0V776.0H27.0V775.9H26.0V775.8H25.0V776.0H24.0V776.0H23.0V775.9H22.0V775.9H21.0V775.9H20.0V776.0H19.0V776.0H18.0V775.9H17.0V775.9H16.0V775.8H15.0V775.8H14.0V776.0H13.0V772.6H12.0V773.5H11.0V763.1H10.0V759.5H9.0V755.9H8.0V754.0H7.2ZM93.2 715.2V660.4H94.0V660.0H95.0V663.4H96.0V659.1H97.0V658.6H98.0V658.1H99.0V657.9H100.0V654.8H101.0V655.1H102.0V655.1H103.0V654.4H104.0V654.4H105.0V659.9H106.0V659.9H107.0V664.0H108.0V654.5H109.0V659.1H110.0V676.0H111.0V677.2H112.0V673.3H113.0V677.6H114.0V680.5H115.0V681.8H116.0V678.2H117.0V679.5H118.0V678.5H119.0V676.9H120.0V675.3H121.0V674.8H122.0V676.7H123.0V676.2H124.0V659.9H125.0V660.0H126.0V659.4H127.0V670.2H128.0V658.2H129.0V657.6H130.0V665.0H131.0V657.6H132.0V657.2H133.0V657.6H134.0V657.6H135.0V654.6H136.0V654.6H137.0V654.6H138.0V654.6H139.0V654.6H140.0V654.6H141.0V654.6H142.0V657.0H143.0V654.6H144.0V654.6H145.0V660.9H146.0V675.3H147.0V675.6H148.0V681.5H149.0V681.5H150.0V677.5H151.0V659.4H152.0V671.5H153.0V666.4H154.0V661.9H155.0V662.8H156.0V674.6H157.0V678.3H158.0V677.6H159.0V678.4H160.0V675.8H161.0V672.5H162.0V658.6H163.0V680.9H164.0V681.1H165.0V680.0H166.0V680.0H167.0V684.4H168.0V684.4H169.0V678.4H170.0V680.0H171.0V680.0H172.0V679.6H173.0V665.0H174.0V677.7H175.0V661.6H176.0V657.1H177.0V656.7H178.0V654.5H179.0V654.5H180.0V654.5H181.0V654.6H182.0V654.6H183.0V654.6H184.0V654.6H185.0V654.5H186.0V654.5H187.0V656.1H188.0V656.1H189.0V655.0H190.0V655.0H191.0V654.5H192.0V654.5H193.0V654.6H194.0V655.8H195.0V680.1H196.0V678.2H197.0V694.4H198.0V709.0H198.7V715.2V721.4H198.0V736.0H197.0V752.2H196.0V750.3H195.0V774.6H194.0V775.8H193.0V775.9H192.0V775.9H191.0V775.4H190.0V775.4H189.0V774.3H188.0V774.3H187.0V775.9H186.0V775.9H185.0V775.8H184.0V775.8H183.0V775.8H182.0V775.8H181.0V775.9H180.0V775.9H179.0V775.9H178.0V773.7H177.0V773.3H176.0V768.8H175.0V752.7H174.0V765.4H173.0V750.8H172.0V750.4H171.0V750.4H170.0V752.0H169.0V746.0H168.0V746.0H167.0V750.4H166.0V750.4H165.0V749.3H164.0V749.5H163.0V771.8H162.0V757.9H161.0V754.6H160.0V752.0H159.0V752.8H158.0V752.1H157.0V755.8H156.0V767.6H155.0V768.5H154.0V764.0H153.0V758.9H152.0V771.0H151.0V752.9H150.0V748.9H149.0V748.9H148.0V754.8H147.0V755.1H146.0V769.5H145.0V775.8H144.0V775.8H143.0V773.4H142.0V775.8H141.0V775.8H140.0V775.8H139.0V775.8H138.0V775.8H137.0V775.8H136.0V775.8H135.0V772.8H134.0V772.8H133.0V773.2H132.0V772.8H131.0V765.4H130.0V772.8H129.0V772.2H128.0V760.2H127.0V771.0H126.0V770.4H125.0V770.5H124.0V754.2H123.0V753.7H122.0V755.6H121.0V755.1H120.0V753.5H119.0V751.9H118.0V750.9H117.0V752.2H116.0V748.6H115.0V749.9H114.0V752.8H113.0V757.1H112.0V753.2H111.0V754.4H110.0V771.3H109.0V775.9H108.0V766.4H107.0V770.5H106.0V770.5H105.0V776.0H104.0V776.0H103.0V775.3H102.0V775.3H101.0V775.6H100.0V772.5H99.0V772.3H98.0V771.8H97.0V771.3H96.0V767.0H95.0V770.4H94.0V770.0H93.2ZM200.9 715.2V664.6H201.0V662.2H202.0V654.4H203.0V654.4H204.0V654.4H205.0V654.4H206.0V654.5H207.0V654.5H208.0V654.4H209.0V654.4H210.0V655.8H211.0V655.1H212.0V655.1H213.0V654.5H214.0V654.4H215.0V654.4H216.0V654.4H217.0V656.1H218.0V654.4H219.0V654.5H220.0V654.4H221.0V654.4H222.0V654.4H223.0V654.8H224.0V656.1H225.0V654.4H226.0V654.6H227.0V654.5H228.0V654.4H229.0V654.5H230.0V654.5H231.0V654.5H232.0V654.4H233.0V654.4H234.0V654.4H235.0V654.4H236.0V654.5H237.0V654.5H238.0V654.4H239.0V654.5H240.0V654.5H241.0V655.4H242.0V654.8H243.0V654.4H244.0V655.2H245.0V655.2H246.0V654.4H247.0V655.9H248.0V655.9H249.0V654.4H250.0V654.4H251.0V654.4H252.0V654.5H253.0V654.5H254.0V654.4H255.0V654.5H256.0V654.5H257.0V656.0H258.0V656.0H259.0V654.4H260.0V654.4H261.0V654.5H262.0V654.5H263.0V654.4H264.0V654.4H265.0V660.8H266.0V660.2H267.0V666.1H268.0V715.2V764.3H267.0V770.2H266.0V769.6H265.0V776.0H264.0V776.0H263.0V775.9H262.0V775.9H261.0V776.0H260.0V776.0H259.0V774.4H258.0V774.4H257.0V775.9H256.0V775.9H255.0V776.0H254.0V775.9H253.0V775.9H252.0V776.0H251.0V776.0H250.0V776.0H249.0V774.5H248.0V774.5H247.0V776.0H246.0V775.2H245.0V775.2H244.0V776.0H243.0V775.6H242.0V775.0H241.0V775.9H240.0V775.9H239.0V776.0H238.0V775.9H237.0V775.9H236.0V776.0H235.0V776.0H234.0V776.0H233.0V776.0H232.0V775.9H231.0V775.9H230.0V775.9H229.0V776.0H228.0V775.9H227.0V775.8H226.0V776.0H225.0V774.3H224.0V775.6H223.0V776.0H222.0V776.0H221.0V776.0H220.0V775.9H219.0V776.0H218.0V774.3H217.0V776.0H216.0V776.0H215.0V776.0H214.0V775.9H213.0V775.3H212.0V775.3H211.0V774.6H210.0V776.0H209.0V776.0H208.0V775.9H207.0V775.9H206.0V776.0H205.0V776.0H204.0V776.0H203.0V776.0H202.0V768.2H201.0V765.8H200.9ZM270.4 715.2V690.4H271.0V689.6H272.0V683.8H273.0V679.7H274.0V678.8H275.0V677.6H276.0V676.5H277.0V679.8H278.0V677.0H279.0V678.7H280.0V678.4H281.0V677.6H282.0V672.9H283.0V669.1H284.0V660.7H285.0V654.9H286.0V668.1H287.0V668.3H288.0V676.4H289.0V676.7H290.0V667.8H291.0V668.0H292.0V662.3H293.0V662.4H294.0V662.4H295.0V659.3H296.0V681.4H297.0V682.3H298.0V661.3H299.0V662.7H300.0V666.2H301.0V683.4H302.0V681.4H303.0V675.1H304.0V669.9H305.0V670.6H306.0V678.5H307.0V678.9H308.0V672.9H309.0V672.2H310.0V671.6H311.0V670.9H312.0V678.0H313.0V677.2H314.0V679.8H315.0V679.1H316.0V667.0H317.0V666.5H318.0V674.7H319.0V676.6H320.0V678.2H321.0V672.4H322.0V671.8H323.0V665.5H324.0V665.0H325.0V669.4H326.0V667.0H327.0V669.8H328.0V668.5H329.0V672.9H330.0V672.1H331.0V658.0H332.0V657.3H333.0V669.1H334.0V668.3H335.0V656.1H336.0V655.4H337.0V658.9H338.0V657.1H339.0V661.4H340.0V685.9H341.0V684.0H342.0V685.9H343.0V680.6H344.0V671.5H345.0V669.5H346.0V674.9H347.0V673.2H348.0V670.8H349.0V669.1H350.0V663.8H351.0V662.1H352.0V655.1H353.0V654.5H354.0V654.9H355.0V654.5H356.0V654.5H357.0V654.5H358.0V655.2H359.0V654.5H360.0V654.5H361.0V654.5H362.0V654.5H363.0V654.5H364.0V654.5H365.0V667.5H366.0V688.7H367.0V689.6H368.0V687.3H369.0V682.1H370.0V679.8H371.0V686.7H372.0V692.1H373.0V694.8H374.0V699.0H375.0V706.3H376.0V712.7H376.7V715.2V717.7H376.0V724.1H375.0V731.4H374.0V735.6H373.0V738.3H372.0V743.7H371.0V750.6H370.0V748.3H369.0V743.1H368.0V740.8H367.0V741.7H366.0V762.9H365.0V775.9H364.0V775.9H363.0V775.9H362.0V775.9H361.0V775.9H360.0V775.9H359.0V775.2H358.0V775.9H357.0V775.9H356.0V775.9H355.0V775.5H354.0V775.9H353.0V775.3H352.0V768.3H351.0V766.6H350.0V761.3H349.0V759.6H348.0V757.2H347.0V755.5H346.0V760.9H345.0V758.9H344.0V749.8H343.0V744.5H342.0V746.4H341.0V744.5H340.0V769.0H339.0V773.3H338.0V771.5H337.0V775.0H336.0V774.3H335.0V762.1H334.0V761.3H333.0V773.1H332.0V772.4H331.0V758.3H330.0V757.5H329.0V761.9H328.0V760.6H327.0V763.4H326.0V761.0H325.0V765.4H324.0V764.9H323.0V758.6H322.0V758.0H321.0V752.2H320.0V753.8H319.0V755.7H318.0V763.9H317.0V763.4H316.0V751.3H315.0V750.6H314.0V753.2H313.0V752.4H312.0V759.5H311.0V758.8H310.0V758.2H309.0V757.5H308.0V751.5H307.0V751.9H306.0V759.8H305.0V760.5H304.0V755.3H303.0V749.0H302.0V747.0H301.0V764.2H300.0V767.7H299.0V769.1H298.0V748.1H297.0V749.0H296.0V771.1H295.0V768.0H294.0V768.0H293.0V768.1H292.0V762.4H291.0V762.6H290.0V753.7H289.0V754.0H288.0V762.1H287.0V762.3H286.0V775.5H285.0V769.7H284.0V761.3H283.0V757.5H282.0V752.8H281.0V752.0H280.0V751.7H279.0V753.4H278.0V750.6H277.0V753.9H276.0V752.8H275.0V751.6H274.0V750.7H273.0V746.6H272.0V740.8H271.0V740.0H270.4ZM379.6 715.2V665.3H380.0V664.2H381.0V655.3H382.0V655.3H383.0V664.6H384.0V654.8H385.0V655.0H386.0V657.6H387.0V655.1H388.0V655.3H389.0V659.9H390.0V659.9H391.0V654.5H392.0V654.5H393.0V654.9H394.0V655.2H395.0V654.7H396.0V654.6H397.0V655.1H398.0V655.1H399.0V655.1H400.0V655.1H401.0V659.5H402.0V654.5H403.0V682.3H404.0V687.4H405.0V687.6H406.0V678.4H407.0V678.3H408.0V687.2H409.0V690.8H410.0V678.2H411.0V688.7H412.0V679.0H413.0V689.2H414.0V687.6H415.0V689.2H416.0V689.7H417.0V688.3H418.0V687.0H419.0V683.6H420.0V680.4H421.0V683.6H422.0V676.9H423.0V672.5H424.0V664.7H425.0V663.5H426.0V664.7H427.0V661.8H428.0V676.2H429.0V675.1H430.0V659.1H431.0V658.5H432.0V663.7H433.0V669.8H434.0V671.9H435.0V672.1H436.0V671.5H437.0V669.9H438.0V654.8H439.0V654.4H440.0V655.1H441.0V655.1H442.0V654.6H443.0V654.5H444.0V663.5H445.0V663.4H446.0V654.9H447.0V654.9H448.0V655.4H449.0V655.4H450.0V654.5H451.0V664.2H452.0V654.8H453.0V654.8H454.0V660.1H455.0V654.6H456.0V654.6H457.0V654.6H458.0V654.6H459.0V654.7H460.0V654.7H461.0V654.5H462.0V654.7H463.0V654.5H464.0V656.2H465.0V654.7H466.0V654.7H467.0V654.7H468.0V657.3H469.0V654.6H470.0V654.6H471.0V654.6H472.0V654.6H473.0V654.6H474.0V654.8H475.0V654.8H476.0V654.7H477.0V654.6H478.0V654.6H479.0V660.3H480.0V668.3H481.0V661.6H482.0V661.5H483.0V662.0H484.0V662.8H485.0V663.1H486.0V663.6H487.0V654.6H488.0V654.6H489.0V654.6H490.0V654.5H491.0V654.5H492.0V654.5H493.0V656.6H494.0V655.5H495.0V655.5H496.0V654.6H497.0V654.6H498.0V654.6H499.0V656.8H500.0V656.8H501.0V654.5H502.0V654.5H503.0V685.0H504.0V715.2V745.4H503.0V775.9H502.0V775.9H501.0V773.6H500.0V773.6H499.0V775.8H498.0V775.8H497.0V775.8H496.0V774.9H495.0V774.9H494.0V773.8H493.0V775.9H492.0V775.9H491.0V775.9H490.0V775.8H489.0V775.8H488.0V775.8H487.0V766.8H486.0V767.3H485.0V767.6H484.0V768.4H483.0V768.9H482.0V768.8H481.0V762.1H480.0V770.1H479.0V775.8H478.0V775.8H477.0V775.7H476.0V775.6H475.0V775.6H474.0V775.8H473.0V775.8H472.0V775.8H471.0V775.8H470.0V775.8H469.0V773.1H468.0V775.7H467.0V775.7H466.0V775.7H465.0V774.2H464.0V775.9H463.0V775.7H462.0V775.9H461.0V775.7H460.0V775.7H459.0V775.8H458.0V775.8H457.0V775.8H456.0V775.8H455.0V770.3H454.0V775.6H453.0V775.6H452.0V766.2H451.0V775.9H450.0V775.0H449.0V775.0H448.0V775.5H447.0V775.5H446.0V767.0H445.0V766.9H444.0V775.9H443.0V775.8H442.0V775.3H441.0V775.3H440.0V776.0H439.0V775.6H438.0V760.5H437.0V758.9H436.0V758.3H435.0V758.5H434.0V760.6H433.0V766.7H432.0V771.9H431.0V771.3H430.0V755.3H429.0V754.2H428.0V768.6H427.0V765.7H426.0V766.9H425.0V765.7H424.0V757.9H423.0V753.5H422.0V746.8H421.0V750.0H420.0V746.8H419.0V743.4H418.0V742.1H417.0V740.7H416.0V741.2H415.0V742.8H414.0V741.2H413.0V751.4H412.0V741.7H411.0V752.2H410.0V739.6H409.0V743.2H408.0V752.1H407.0V752.0H406.0V742.8H405.0V743.0H404.0V748.1H403.0V775.9H402.0V770.9H401.0V775.3H400.0V775.3H399.0V775.3H398.0V775.3H397.0V775.8H396.0V775.7H395.0V775.2H394.0V775.5H393.0V775.9H392.0V775.9H391.0V770.5H390.0V770.5H389.0V775.1H388.0V775.3H387.0V772.8H386.0V775.4H385.0V775.6H384.0V765.8H383.0V775.1H382.0V775.1H381.0V766.2H380.0V765.1H379.6ZM506.4 715.2V665.7H507.0V666.5H508.0V664.3H509.0V661.2H510.0V672.0H511.0V677.0H512.0V677.1H513.0V658.2H514.0V658.0H515.0V657.6H516.0V657.8H517.0V658.0H518.0V658.0H519.0V662.9H520.0V663.3H521.0V666.9H522.0V665.1H523.0V672.0H524.0V679.5H525.0V664.4H526.0V664.2H527.0V671.5H528.0V669.4H529.0V673.0H530.0V680.9H531.0V683.1H532.0V685.7H533.0V676.2H534.0V678.0H535.0V676.9H536.0V679.3H537.0V673.6H538.0V666.1H539.0V663.5H540.0V660.7H541.0V665.8H542.0V670.4H543.0V672.0H544.0V664.3H545.0V673.8H546.0V675.6H547.0V676.6H548.0V677.3H549.0V675.3H550.0V675.8H551.0V676.7H552.0V672.4H553.0V656.8H554.0V659.3H555.0V655.2H556.0V654.9H557.0V657.6H558.0V657.6H559.0V655.1H560.0V654.8H561.0V654.9H562.0V663.3H563.0V654.4H564.0V654.6H565.0V654.6H566.0V654.8H567.0V661.0H568.0V661.0H569.0V657.1H570.0V660.7H571.0V666.8H572.0V675.7H573.0V661.9H574.0V661.3H575.0V661.4H576.0V655.9H577.0V656.3H578.0V664.8H579.0V656.8H580.0V662.9H581.0V663.1H582.0V669.4H583.0V676.6H584.0V684.1H585.0V689.6H586.0V696.9H587.0V703.8H588.0V709.7H589.0V713.8H589.5V715.2V716.6H589.0V720.7H588.0V726.6H587.0V733.5H586.0V740.8H585.0V746.3H584.0V753.8H583.0V761.0H582.0V767.3H581.0V767.5H580.0V773.6H579.0V765.6H578.0V774.1H577.0V774.5H576.0V769.0H575.0V769.1H574.0V768.5H573.0V754.7H572.0V763.6H571.0V769.7H570.0V773.3H569.0V769.4H568.0V769.4H567.0V775.6H566.0V775.8H565.0V775.8H564.0V776.0H563.0V767.1H562.0V775.5H561.0V775.6H560.0V775.3H559.0V772.8H558.0V772.8H557.0V775.5H556.0V775.2H555.0V771.1H554.0V773.6H553.0V758.0H552.0V753.7H551.0V754.6H550.0V755.1H549.0V753.1H548.0V753.8H547.0V754.8H546.0V756.6H545.0V766.1H544.0V758.4H543.0V760.0H542.0V764.6H541.0V769.7H540.0V766.9H539.0V764.3H538.0V756.8H537.0V751.1H536.0V753.5H535.0V752.4H534.0V754.2H533.0V744.7H532.0V747.3H531.0V749.5H530.0V757.4H529.0V761.0H528.0V758.9H527.0V766.2H526.0V766.0H525.0V750.9H524.0V758.4H523.0V765.3H522.0V763.5H521.0V767.1H520.0V767.5H519.0V772.4H518.0V772.4H517.0V772.6H516.0V772.8H515.0V772.4H514.0V772.2H513.0V753.3H512.0V753.4H511.0V758.4H510.0V769.2H509.0V766.1H508.0V763.9H507.0V764.7H506.4ZM591.4 715.2V693.1H592.0V689.3H593.0V693.5H594.0V693.2H595.0V693.9H596.0V692.0H597.0V686.7H598.0V686.2H599.0V693.4H600.0V685.5H601.0V692.1H602.0V691.9H603.0V684.9H604.0V684.7H605.0V684.4H606.0V684.2H607.0V683.8H608.0V683.5H609.0V687.6H610.0V691.3H611.0V688.7H612.0V683.0H613.0V682.8H614.0V691.2H615.0V691.1H616.0V683.5H617.0V681.7H618.0V680.0H619.0V679.5H620.0V686.7H621.0V682.2H622.0V684.6H623.0V683.2H624.0V680.9H625.0V677.0H626.0V677.7H627.0V665.2H628.0V671.1H629.0V669.3H630.0V661.1H631.0V659.8H632.0V658.9H633.0V657.4H634.0V657.2H635.0V657.0H636.0V657.0H637.0V656.9H638.0V656.9H639.0V657.1H640.0V656.9H641.0V656.0H642.0V656.1H643.0V656.0H644.0V656.1H645.0V655.5H646.0V664.7H647.0V664.5H648.0V654.8H649.0V654.7H650.0V663.3H651.0V663.8H652.0V656.4H653.0V657.1H654.0V657.3H655.0V668.1H656.0V688.4H657.0V684.3H658.0V673.9H659.0V674.8H660.0V670.9H661.0V691.2H662.0V691.4H663.0V674.6H664.0V688.0H665.0V686.1H666.0V662.6H667.0V688.8H668.0V673.3H669.0V681.9H670.0V668.8H671.0V685.4H672.0V685.1H673.0V685.2H674.0V685.5H675.0V685.6H676.0V669.4H677.0V665.8H678.0V680.5H679.0V680.6H680.0V664.8H681.0V678.9H682.0V673.5H683.0V673.6H684.0V667.8H685.0V673.6H686.0V689.3H687.0V689.3H688.0V666.5H689.0V666.0H690.0V676.3H691.0V663.4H692.0V662.9H693.0V675.2H694.0V684.7H695.0V684.3H696.0V661.5H697.0V671.2H698.0V662.2H699.0V654.8H700.0V654.8H701.0V661.2H702.0V662.3H703.0V662.3H704.0V661.2H705.0V674.0H706.0V677.4H707.0V655.0H708.0V654.8H709.0V657.0H710.0V654.5H711.0V688.8H712.0V688.8H713.0V690.2H714.0V664.4H715.0V664.4H716.0V666.1H717.0V666.1H718.0V655.0H719.0V654.4H720.0V654.5H721.0V687.6H722.0V687.4H723.0V689.1H724.0V685.4H725.0V688.7H726.0V688.7H727.0V690.8H728.0V670.5H729.0V670.7H730.0V671.4H731.0V671.6H732.0V689.1H733.0V667.6H734.0V654.7H735.0V658.5H736.0V659.4H737.0V654.7H738.0V655.2H739.0V655.0H740.0V666.8H741.0V655.0H742.0V658.0H743.0V684.5H744.0V693.1H745.0V709.2H746.0V715.2V721.2H745.0V737.3H744.0V745.9H743.0V772.4H742.0V775.4H741.0V763.6H740.0V775.4H739.0V775.2H738.0V775.7H737.0V771.0H736.0V771.9H735.0V775.7H734.0V762.8H733.0V741.3H732.0V758.8H731.0V759.0H730.0V759.7H729.0V759.9H728.0V739.6H727.0V741.7H726.0V741.7H725.0V745.0H724.0V741.3H723.0V743.0H722.0V742.8H721.0V775.9H720.0V776.0H719.0V775.4H718.0V764.3H717.0V764.3H716.0V766.0H715.0V766.0H714.0V740.2H713.0V741.6H712.0V741.6H711.0V775.9H710.0V773.4H709.0V775.6H708.0V775.4H707.0V753.0H706.0V756.4H705.0V769.2H704.0V768.1H703.0V768.1H702.0V769.2H701.0V775.6H700.0V775.6H699.0V768.2H698.0V759.2H697.0V768.9H696.0V746.1H695.0V745.7H694.0V755.2H693.0V767.5H692.0V767.0H691.0V754.1H690.0V764.4H689.0V763.9H688.0V741.1H687.0V741.1H686.0V756.8H685.0V762.6H684.0V756.8H683.0V756.9H682.0V751.5H681.0V765.6H680.0V749.8H679.0V749.9H678.0V764.6H677.0V761.0H676.0V744.8H675.0V744.9H674.0V745.2H673.0V745.3H672.0V745.0H671.0V761.6H670.0V748.5H669.0V757.1H668.0V741.6H667.0V767.8H666.0V744.3H665.0V742.4H664.0V755.8H663.0V739.0H662.0V739.2H661.0V759.5H660.0V755.6H659.0V756.5H658.0V746.1H657.0V742.0H656.0V762.3H655.0V773.1H654.0V773.3H653.0V774.0H652.0V766.6H651.0V767.1H650.0V775.7H649.0V775.6H648.0V765.9H647.0V765.7H646.0V774.9H645.0V774.3H644.0V774.4H643.0V774.3H642.0V774.4H641.0V773.5H640.0V773.3H639.0V773.5H638.0V773.5H637.0V773.4H636.0V773.4H635.0V773.2H634.0V773.0H633.0V771.5H632.0V770.6H631.0V769.3H630.0V761.1H629.0V759.3H628.0V765.2H627.0V752.7H626.0V753.4H625.0V749.5H624.0V747.2H623.0V745.8H622.0V748.2H621.0V743.7H620.0V750.9H619.0V750.4H618.0V748.7H617.0V746.9H616.0V739.3H615.0V739.2H614.0V747.6H613.0V747.4H612.0V741.7H611.0V739.1H610.0V742.8H609.0V746.9H608.0V746.6H607.0V746.2H606.0V746.0H605.0V745.7H604.0V745.5H603.0V738.5H602.0V738.3H601.0V744.9H600.0V737.0H599.0V744.2H598.0V743.7H597.0V738.4H596.0V736.5H595.0V737.2H594.0V736.9H593.0V741.1H592.0V737.3H591.4ZM749.2 715.2V680.3H750.0V676.0H751.0V675.3H752.0V672.7H753.0V659.8H754.0V658.5H755.0V666.5H756.0V666.5H757.0V654.6H758.0V654.4H759.0V654.6H760.0V661.3H761.0V661.3H762.0V654.5H763.0V654.5H764.0V658.0H765.0V659.7H766.0V673.6H767.0V664.4H768.0V666.6H769.0V659.8H770.0V659.8H771.0V668.5H772.0V661.7H773.0V655.1H774.0V655.1H775.0V654.5H776.0V654.5H777.0V656.0H778.0V654.6H779.0V665.0H780.0V665.0H781.0V655.0H782.0V654.6H783.0V662.8H784.0V654.7H785.0V654.7H786.0V660.6H787.0V655.0H788.0V654.8H789.0V654.8H790.0V663.7H791.0V661.5H792.0V654.5H793.0V654.5H794.0V680.9H795.0V664.7H796.0V673.2H797.0V673.3H798.0V665.5H799.0V679.7H800.0V681.5H801.0V679.7H802.0V679.6H803.0V667.0H804.0V667.1H805.0V658.4H806.0V665.3H807.0V656.8H808.0V656.8H809.0V656.6H810.0V656.6H811.0V656.4H812.0V656.4H813.0V667.7H814.0V669.1H815.0V669.1H816.0V654.5H817.0V654.4H818.0V654.4H819.0V654.5H820.0V654.4H821.0V654.5H822.0V654.5H823.0V654.5H824.0V654.5H825.0V654.4H826.0V654.4H827.0V654.5H828.0V655.2H829.0V654.5H830.0V654.4H831.0V654.4H832.0V654.9H833.0V654.4H834.0V654.5H835.0V668.0H836.0V659.5H837.0V655.0H838.0V654.5H839.0V654.4H840.0V654.4H841.0V654.5H842.0V654.4H843.0V654.4H844.0V656.1H845.0V680.4H846.0V696.6H847.0V710.7H847.2V715.2V719.7H847.0V733.8H846.0V750.0H845.0V774.3H844.0V776.0H843.0V776.0H842.0V775.9H841.0V776.0H840.0V776.0H839.0V775.9H838.0V775.4H837.0V770.9H836.0V762.4H835.0V775.9H834.0V776.0H833.0V775.5H832.0V776.0H831.0V776.0H830.0V775.9H829.0V775.2H828.0V775.9H827.0V776.0H826.0V776.0H825.0V775.9H824.0V775.9H823.0V775.9H822.0V775.9H821.0V776.0H820.0V775.9H819.0V776.0H818.0V776.0H817.0V775.9H816.0V761.3H815.0V761.3H814.0V762.7H813.0V774.0H812.0V774.0H811.0V773.8H810.0V773.8H809.0V773.6H808.0V773.6H807.0V765.1H806.0V772.0H805.0V763.3H804.0V763.4H803.0V750.8H802.0V750.7H801.0V748.9H800.0V750.7H799.0V764.9H798.0V757.1H797.0V757.2H796.0V765.7H795.0V749.5H794.0V775.9H793.0V775.9H792.0V768.9H791.0V766.7H790.0V775.6H789.0V775.6H788.0V775.4H787.0V769.8H786.0V775.7H785.0V775.7H784.0V767.6H783.0V775.8H782.0V775.4H781.0V765.4H780.0V765.4H779.0V775.8H778.0V774.4H777.0V775.9H776.0V775.9H775.0V775.3H774.0V775.3H773.0V768.7H772.0V761.9H771.0V770.6H770.0V770.6H769.0V763.8H768.0V766.0H767.0V756.8H766.0V770.7H765.0V772.4H764.0V775.9H763.0V775.9H762.0V769.1H761.0V769.1H760.0V775.8H759.0V776.0H758.0V775.8H757.0V763.9H756.0V763.9H755.0V771.9H754.0V770.6H753.0V757.7H752.0V755.1H751.0V754.4H750.0V750.1H749.2ZM849.9 715.2V655.1H850.0V655.1H851.0V666.7H852.0V654.6H853.0V654.6H854.0V661.4H855.0V660.9H856.0V654.5H857.0V657.2H858.0V657.2H859.0V657.1H860.0V654.5H861.0V654.5H862.0V654.5H863.0V654.6H864.0V654.6H865.0V654.6H866.0V654.6H867.0V654.5H868.0V654.5H869.0V654.6H870.0V654.6H871.0V654.5H872.0V654.6H873.0V654.6H874.0V654.6H875.0V664.8H876.0V667.3H877.0V670.3H878.0V681.3H879.0V680.0H880.0V674.7H881.0V668.9H882.0V672.7H883.0V672.4H884.0V666.3H885.0V676.4H886.0V678.2H887.0V678.6H888.0V672.6H889.0V671.8H890.0V675.8H891.0V675.0H892.0V654.6H893.0V657.3H894.0V654.5H895.0V654.7H896.0V654.5H897.0V654.7H898.0V654.7H899.0V654.5H900.0V654.6H901.0V654.4H902.0V654.6H903.0V654.6H904.0V654.6H905.0V654.7H906.0V654.7H907.0V654.7H908.0V654.4H909.0V654.4H910.0V654.5H911.0V657.3H912.0V654.5H913.0V654.6H914.0V667.2H915.0V693.6H916.0V694.4H917.0V694.4H918.0V693.1H919.0V693.3H920.0V676.2H921.0V678.6H922.0V654.4H923.0V685.2H924.0V685.1H925.0V683.9H926.0V683.5H927.0V683.1H928.0V679.4H929.0V675.5H930.0V654.6H931.0V654.5H932.0V654.4H933.0V654.4H934.0V654.6H935.0V666.4H936.0V654.6H937.0V654.6H938.0V654.5H939.0V654.5H940.0V654.6H941.0V654.4H942.0V654.4H943.0V657.0H944.0V657.1H945.0V654.5H946.0V654.6H947.0V654.6H948.0V654.5H949.0V656.6H950.0V656.6H951.0V654.5H952.0V654.5H953.0V654.6H954.0V654.6H955.0V654.4H956.0V654.4H957.0V654.6H958.0V654.5H959.0V668.4H960.0V677.9H961.0V683.1H962.0V686.0H963.0V702.6H964.0V698.9H965.0V690.4H966.0V688.3H967.0V685.8H968.0V687.8H969.0V689.9H970.0V695.5H971.0V699.7H972.0V707.0H973.0V713.0H973.5V715.2V717.4H973.0V723.4H972.0V730.7H971.0V734.9H970.0V740.5H969.0V742.6H968.0V744.6H967.0V742.1H966.0V740.0H965.0V731.5H964.0V727.8H963.0V744.4H962.0V747.3H961.0V752.5H960.0V762.0H959.0V775.9H958.0V775.8H957.0V776.0H956.0V776.0H955.0V775.8H954.0V775.8H953.0V775.9H952.0V775.9H951.0V773.8H950.0V773.8H949.0V775.9H948.0V775.8H947.0V775.8H946.0V775.9H945.0V773.3H944.0V773.4H943.0V776.0H942.0V776.0H941.0V775.8H940.0V775.9H939.0V775.9H938.0V775.8H937.0V775.8H936.0V764.0H935.0V775.8H934.0V776.0H933.0V776.0H932.0V775.9H931.0V775.8H930.0V754.9H929.0V751.0H928.0V747.3H927.0V746.9H926.0V746.5H925.0V745.3H924.0V745.2H923.0V776.0H922.0V751.8H921.0V754.2H920.0V737.1H919.0V737.3H918.0V736.0H917.0V736.0H916.0V736.8H915.0V763.2H914.0V775.8H913.0V775.9H912.0V773.1H911.0V775.9H910.0V776.0H909.0V776.0H908.0V775.7H907.0V775.7H906.0V775.7H905.0V775.8H904.0V775.8H903.0V775.8H902.0V776.0H901.0V775.8H900.0V775.9H899.0V775.7H898.0V775.7H897.0V775.9H896.0V775.7H895.0V775.9H894.0V773.1H893.0V775.8H892.0V755.4H891.0V754.6H890.0V758.6H889.0V757.8H888.0V751.8H887.0V752.2H886.0V754.0H885.0V764.1H884.0V758.0H883.0V757.7H882.0V761.5H881.0V755.7H880.0V750.4H879.0V749.1H878.0V760.1H877.0V763.1H876.0V765.6H875.0V775.8H874.0V775.8H873.0V775.8H872.0V775.9H871.0V775.8H870.0V775.8H869.0V775.9H868.0V775.9H867.0V775.8H866.0V775.8H865.0V775.8H864.0V775.8H863.0V775.9H862.0V775.9H861.0V775.9H860.0V773.3H859.0V773.2H858.0V773.2H857.0V775.9H856.0V769.5H855.0V769.0H854.0V775.8H853.0V775.8H852.0V763.7H851.0V775.3H850.0V775.3H849.9Z"/>
<rect x="506.95" y="518.6" width="1.3" height="266" fill="#e3202c"/>
<path fill="#9a9a9a" d="M7.1 764.1L17.6 774.3V785H7.1Z"/>
<path fill="#9a9a9a" d="M93.1 764.1L103.6 774.3V785H93.1Z"/>
<path fill="#9a9a9a" d="M200.6 764.1L211.1 774.3V785H200.6Z"/>
<path fill="#9a9a9a" d="M270.3 764.1L280.8 774.3V785H270.3Z"/>
<path fill="#9a9a9a" d="M379.7 764.1L390.2 774.3V785H379.7Z"/>
<path fill="#9a9a9a" d="M506.0 764.1L516.5 774.3V785H506.0Z"/>
<path fill="#9a9a9a" d="M591.7 764.1L602.2 774.3V785H591.7Z"/>
<path fill="#9a9a9a" d="M748.9 764.1L759.4 774.3V785H748.9Z"/>
<path fill="#9a9a9a" d="M849.7 764.1L860.2 774.3V785H849.7Z"/>
</svg>









<svg class="abs" style="left:0;top:0" width="1214" height="876" viewBox="0 0 1214 876"><defs><radialGradient id="kg" cx="0.5" cy="0.35" r="0.6"><stop offset="0" stop-color="#5d94ea"/><stop offset="1" stop-color="#3872d6"/></radialGradient><linearGradient id="bg" x1="0" y1="0" x2="0" y2="1"><stop offset="0" stop-color="#70a0f7"/><stop offset="0.55" stop-color="#4a82f3"/><stop offset="1" stop-color="#3a73ee"/></linearGradient></defs><rect x="16.6" y="815" width="510.2" height="8.1" rx="4" fill="#fff"/><circle cx="31.7" cy="819.1" r="5.3" fill="url(#kg)"/><rect x="544" y="796.9" width="125.8" height="44.4" rx="5" fill="#fff"/><rect x="1054" y="77" width="127.4" height="25.5" rx="4.5" fill="#fff"/><rect x="1054" y="109.3" width="127.4" height="25.2" rx="4.5" fill="#fff"/><rect x="1054" y="141.3" width="127.4" height="25" rx="4.5" fill="#fff"/><rect x="1054" y="173.1" width="127.4" height="27.2" rx="4.5" fill="url(#bg)"/></svg>











<svg class="abs" style="left:0;top:0" width="1214" height="876" viewBox="0 0 1214 876">
<defs><linearGradient id="gb" x1="0" y1="347.8" x2="0" y2="763.7" gradientUnits="userSpaceOnUse"><stop offset="0" stop-color="#f01c1c"/><stop offset="0.05" stop-color="#f03a20"/><stop offset="0.13" stop-color="#eea030"/><stop offset="0.19" stop-color="#d8dc36"/><stop offset="0.225" stop-color="#b4d636"/><stop offset="0.27" stop-color="#7fd13b"/><stop offset="0.33" stop-color="#3fd242"/><stop offset="0.38" stop-color="#30d040"/><stop offset="1" stop-color="#30d040"/></linearGradient><linearGradient id="gd" x1="0" y1="347.8" x2="0" y2="763.7" gradientUnits="userSpaceOnUse"><stop offset="0" stop-color="#7b181b"/><stop offset="0.03" stop-color="#7b1c1c"/><stop offset="0.08" stop-color="#7a3621"/><stop offset="0.13" stop-color="#7a5826"/><stop offset="0.17" stop-color="#78722a"/><stop offset="0.225" stop-color="#6e7a2a"/><stop offset="1" stop-color="#6e7a2a"/></linearGradient></defs>
<g fill="#4d4d4d">
<path d="M1018.2 275L1030.6 268.6V281.4Z"/><path d="M1029.6 275L1042.4 268.6V281.4Z"/>
<rect x="1058.9" y="262.4" width="5.2" height="25.5"/><rect x="1069" y="262.4" width="5.2" height="25.5"/>
<path d="M1115.3 275L1102.6 268.6V281.4Z"/><path d="M1103.6 275L1090.9 268.6V281.4Z"/>
</g>
<g fill="none" stroke="#7d7d7d" stroke-width="1.6"><path d="M1145.3 263.2H1153.6V267"/><path d="M1145.3 287H1153.6V283.4"/><path d="M1170.8 263.2H1162.4V270"/><path d="M1170.8 287H1162.4V280"/></g>
<path fill="#c4000e" d="M1150.6 267.6L1165.2 275.2L1150.6 282.8Z"/>
<rect x="1085.8" y="320" width="20.3" height="444.7" fill="#f6f1f5"/>
<rect x="1086.8" y="321" width="6.5" height="21" fill="#7b181b"/>
<rect x="1086.8" y="347.8" width="6.5" height="93.4" fill="url(#gd)"/>
<rect x="1086.8" y="441.2" width="6.5" height="322.5" fill="url(#gb)"/>
<rect x="1098.7" y="321" width="6.5" height="21" fill="#7b181b"/>
<rect x="1098.7" y="347.8" width="6.5" height="96.1" fill="url(#gd)"/>
<rect x="1098.7" y="443.9" width="6.5" height="319.8" fill="url(#gb)"/>
</svg>






<div class="abs" style="left:1px;top:49px;width:1210px;height:825px;border:1px solid #fbfbfb;border-top:none;border-radius:0 0 5px 5px;"></div>
<div class="abs" style="left:0;top:0;width:1214px;height:876px;border-radius:6px;box-shadow:inset 0 0 0 1px rgba(110,110,110,.55);"></div>
<svg id="txt" width="1214" height="876" viewBox="0 0 1214 876" font-family="Liberation Sans, sans-serif" xml:space="preserve"><text x="607.00" y="17.60" font-size="14" fill="#3c3c3c" text-anchor="middle" textLength="256.00" lengthAdjust="spacing">DDP Player - Sonoris Audio Engineering</text><text x="14.00" y="41.70" font-size="14.5" fill="#ffffff" textLength="22.30" lengthAdjust="spacingAndGlyphs">File</text><text x="62.50" y="41.70" font-size="14.5" fill="#ffffff" textLength="43.80" lengthAdjust="spacing">Import</text><text x="132.70" y="41.70" font-size="14.5" fill="#ffffff" textLength="51.60" lengthAdjust="spacingAndGlyphs">Burn CD</text><text x="210.00" y="41.70" font-size="14.5" fill="#ffffff" textLength="34.00" lengthAdjust="spacing">Tools</text><text x="270.00" y="41.70" font-size="14.5" fill="#ffffff" textLength="30.00" lengthAdjust="spacing">Help</text><text x="12.00" y="76.00" font-size="14.7" fill="#0c0c0c" textLength="33.70" lengthAdjust="spacingAndGlyphs" stroke="#0c0c0c" stroke-width="0.18">Track</text><text x="59.80" y="76.00" font-size="14.7" fill="#0c0c0c" textLength="34.10" lengthAdjust="spacingAndGlyphs" stroke="#0c0c0c" stroke-width="0.18">Index</text><text x="107.50" y="76.00" font-size="14.7" fill="#0c0c0c" textLength="29.60" lengthAdjust="spacingAndGlyphs" stroke="#0c0c0c" stroke-width="0.18">Start</text><text x="176.90" y="76.00" font-size="14.7" fill="#0c0c0c" textLength="54.10" lengthAdjust="spacingAndGlyphs" stroke="#0c0c0c" stroke-width="0.18">Duration</text><text x="245.80" y="76.00" font-size="14.7" fill="#0c0c0c" textLength="28.40" lengthAdjust="spacingAndGlyphs" stroke="#0c0c0c" stroke-width="0.18">ISRC</text><text x="356.50" y="76.00" font-size="14.7" fill="#0c0c0c" textLength="26.80" lengthAdjust="spacingAndGlyphs" stroke="#0c0c0c" stroke-width="0.18">Title</text><text x="467.10" y="76.00" font-size="14.7" fill="#0c0c0c" textLength="63.70" lengthAdjust="spacingAndGlyphs" stroke="#0c0c0c" stroke-width="0.18">Performer</text><text x="12.50" y="102.60" font-size="13.8" fill="#4b4b4b" stroke="#4b4b4b" stroke-width="0.25">1</text><text x="59.90" y="102.60" font-size="13.8" fill="#4b4b4b" stroke="#4b4b4b" stroke-width="0.25">0</text><text x="108.50" y="102.60" font-size="13.8" fill="#4b4b4b" textLength="54.04" lengthAdjust="spacing" stroke="#4b4b4b" stroke-width="0.25">00:00:00</text><text x="177.70" y="102.60" font-size="13.8" fill="#4b4b4b" textLength="54.04" lengthAdjust="spacing" stroke="#4b4b4b" stroke-width="0.25">00:02:00</text><text x="246.60" y="102.60" font-size="13.2" fill="#4b4b4b" textLength="93.00" lengthAdjust="spacingAndGlyphs" stroke="#4b4b4b" stroke-width="0.25">USQDJ0900001</text><text x="59.90" y="126.04" font-size="13.8" fill="#4b4b4b" stroke="#4b4b4b" stroke-width="0.25">1</text><text x="108.50" y="126.04" font-size="13.8" fill="#4b4b4b" textLength="54.04" lengthAdjust="spacing" stroke="#4b4b4b" stroke-width="0.25">00:02:00</text><text x="177.70" y="126.04" font-size="13.8" fill="#4b4b4b" textLength="54.04" lengthAdjust="spacing" stroke="#4b4b4b" stroke-width="0.25">04:35:54</text><text x="357.00" y="126.04" font-size="13.2" fill="#4b4b4b" textLength="34.80" lengthAdjust="spacing" stroke="#4b4b4b" stroke-width="0.25">Water</text><text x="467.80" y="126.04" font-size="13.2" fill="#4b4b4b" textLength="58.60" lengthAdjust="spacing" stroke="#4b4b4b" stroke-width="0.25">Hot Shots</text><text x="12.50" y="149.48" font-size="13.8" fill="#4b4b4b" stroke="#4b4b4b" stroke-width="0.25">2</text><text x="59.90" y="149.48" font-size="13.8" fill="#4b4b4b" stroke="#4b4b4b" stroke-width="0.25">0</text><text x="108.50" y="149.48" font-size="13.8" fill="#4b4b4b" textLength="54.04" lengthAdjust="spacing" stroke="#4b4b4b" stroke-width="0.25">04:37:54</text><text x="177.70" y="149.48" font-size="13.8" fill="#4b4b4b" textLength="54.04" lengthAdjust="spacing" stroke="#4b4b4b" stroke-width="0.25">00:02:00</text><text x="246.60" y="149.48" font-size="13.2" fill="#4b4b4b" textLength="93.00" lengthAdjust="spacingAndGlyphs" stroke="#4b4b4b" stroke-width="0.25">USQDJ0900002</text><text x="59.90" y="172.92" font-size="13.8" fill="#4b4b4b" stroke="#4b4b4b" stroke-width="0.25">1</text><text x="108.50" y="172.92" font-size="13.8" fill="#4b4b4b" textLength="54.04" lengthAdjust="spacing" stroke="#4b4b4b" stroke-width="0.25">04:39:54</text><text x="177.70" y="172.92" font-size="13.8" fill="#4b4b4b" textLength="54.04" lengthAdjust="spacing" stroke="#4b4b4b" stroke-width="0.25">05:43:25</text><text x="357.00" y="172.92" font-size="13.2" fill="#4b4b4b" textLength="58.60" lengthAdjust="spacing" stroke="#4b4b4b" stroke-width="0.25">Hot Shots</text><text x="467.80" y="172.92" font-size="13.2" fill="#4b4b4b" textLength="58.60" lengthAdjust="spacing" stroke="#4b4b4b" stroke-width="0.25">Hot Shots</text><text x="12.50" y="196.36" font-size="13.8" fill="#4b4b4b" stroke="#4b4b4b" stroke-width="0.25">3</text><text x="59.90" y="196.36" font-size="13.8" fill="#4b4b4b" stroke="#4b4b4b" stroke-width="0.25">0</text><text x="108.50" y="196.36" font-size="13.8" fill="#4b4b4b" textLength="54.04" lengthAdjust="spacing" stroke="#4b4b4b" stroke-width="0.25">10:23:04</text><text x="177.70" y="196.36" font-size="13.8" fill="#4b4b4b" textLength="54.04" lengthAdjust="spacing" stroke="#4b4b4b" stroke-width="0.25">00:02:00</text><text x="246.60" y="196.36" font-size="13.2" fill="#4b4b4b" textLength="93.00" lengthAdjust="spacingAndGlyphs" stroke="#4b4b4b" stroke-width="0.25">USQDJ0900003</text><text x="59.90" y="219.80" font-size="13.8" fill="#4b4b4b" stroke="#4b4b4b" stroke-width="0.25">1</text><text x="108.50" y="219.80" font-size="13.8" fill="#4b4b4b" textLength="54.04" lengthAdjust="spacing" stroke="#4b4b4b" stroke-width="0.25">10:25:04</text><text x="177.70" y="219.80" font-size="13.8" fill="#4b4b4b" textLength="54.04" lengthAdjust="spacing" stroke="#4b4b4b" stroke-width="0.25">03:41:23</text><text x="357.00" y="219.80" font-size="13.2" fill="#4b4b4b" textLength="80.20" lengthAdjust="spacing" stroke="#4b4b4b" stroke-width="0.25">Light my Fire</text><text x="467.80" y="219.80" font-size="13.2" fill="#4b4b4b" textLength="58.60" lengthAdjust="spacing" stroke="#4b4b4b" stroke-width="0.25">Hot Shots</text><text x="12.50" y="243.24" font-size="13.8" fill="#4b4b4b" stroke="#4b4b4b" stroke-width="0.25">4</text><text x="59.90" y="243.24" font-size="13.8" fill="#4b4b4b" stroke="#4b4b4b" stroke-width="0.25">0</text><text x="108.50" y="243.24" font-size="13.8" fill="#4b4b4b" textLength="54.04" lengthAdjust="spacing" stroke="#4b4b4b" stroke-width="0.25">14:06:27</text><text x="177.70" y="243.24" font-size="13.8" fill="#4b4b4b" textLength="54.04" lengthAdjust="spacing" stroke="#4b4b4b" stroke-width="0.25">00:02:00</text><text x="246.60" y="243.24" font-size="13.2" fill="#4b4b4b" textLength="93.00" lengthAdjust="spacingAndGlyphs" stroke="#4b4b4b" stroke-width="0.25">USQDJ0900004</text><text x="59.90" y="266.68" font-size="13.8" fill="#4b4b4b" stroke="#4b4b4b" stroke-width="0.25">1</text><text x="108.50" y="266.68" font-size="13.8" fill="#4b4b4b" textLength="54.04" lengthAdjust="spacing" stroke="#4b4b4b" stroke-width="0.25">14:08:27</text><text x="177.70" y="266.68" font-size="13.8" fill="#4b4b4b" textLength="54.04" lengthAdjust="spacing" stroke="#4b4b4b" stroke-width="0.25">05:48:46</text><text x="357.00" y="266.68" font-size="13.2" fill="#4b4b4b" textLength="73.60" lengthAdjust="spacing" stroke="#4b4b4b" stroke-width="0.25">Fire Burning</text><text x="467.80" y="266.68" font-size="13.2" fill="#4b4b4b" textLength="58.60" lengthAdjust="spacing" stroke="#4b4b4b" stroke-width="0.25">Hot Shots</text><text x="12.50" y="290.12" font-size="13.8" fill="#4b4b4b" stroke="#4b4b4b" stroke-width="0.25">5</text><text x="59.90" y="290.12" font-size="13.8" fill="#4b4b4b" stroke="#4b4b4b" stroke-width="0.25">0</text><text x="108.50" y="290.12" font-size="13.8" fill="#4b4b4b" textLength="54.04" lengthAdjust="spacing" stroke="#4b4b4b" stroke-width="0.25">19:56:73</text><text x="177.70" y="290.12" font-size="13.8" fill="#4b4b4b" textLength="54.04" lengthAdjust="spacing" stroke="#4b4b4b" stroke-width="0.25">00:02:00</text><text x="246.60" y="290.12" font-size="13.2" fill="#4b4b4b" textLength="93.00" lengthAdjust="spacingAndGlyphs" stroke="#4b4b4b" stroke-width="0.25">USQDJ0900005</text><text x="59.90" y="313.56" font-size="13.8" fill="#4b4b4b" stroke="#4b4b4b" stroke-width="0.25">1</text><text x="108.50" y="313.56" font-size="13.8" fill="#4b4b4b" textLength="54.04" lengthAdjust="spacing" stroke="#4b4b4b" stroke-width="0.25">19:58:73</text><text x="177.70" y="313.56" font-size="13.8" fill="#4b4b4b" textLength="54.04" lengthAdjust="spacing" stroke="#4b4b4b" stroke-width="0.25">06:46:06</text><text x="357.00" y="313.56" font-size="13.2" fill="#4b4b4b" textLength="36.00" lengthAdjust="spacingAndGlyphs" stroke="#4b4b4b" stroke-width="0.25">Ashes</text><text x="467.80" y="313.56" font-size="13.2" fill="#4b4b4b" textLength="58.60" lengthAdjust="spacing" stroke="#4b4b4b" stroke-width="0.25">Hot Shots</text><text x="12.50" y="337.00" font-size="13.8" fill="#4b4b4b" stroke="#4b4b4b" stroke-width="0.25">6</text><text x="59.90" y="337.00" font-size="13.8" fill="#4b4b4b" stroke="#4b4b4b" stroke-width="0.25">0</text><text x="108.50" y="337.00" font-size="13.8" fill="#4b4b4b" textLength="54.04" lengthAdjust="spacing" stroke="#4b4b4b" stroke-width="0.25">26:45:04</text><text x="177.70" y="337.00" font-size="13.8" fill="#4b4b4b" textLength="54.04" lengthAdjust="spacing" stroke="#4b4b4b" stroke-width="0.25">00:02:00</text><text x="246.60" y="337.00" font-size="13.2" fill="#4b4b4b" textLength="93.00" lengthAdjust="spacingAndGlyphs" stroke="#4b4b4b" stroke-width="0.25">USQDJ0900006</text><text x="59.90" y="360.44" font-size="13.8" fill="#ffffff" stroke="#ffffff" stroke-width="0.25">1</text><text x="108.50" y="360.44" font-size="13.8" fill="#ffffff" textLength="54.04" lengthAdjust="spacing" stroke="#ffffff" stroke-width="0.25">26:47:04</text><text x="177.70" y="360.44" font-size="13.8" fill="#ffffff" textLength="54.04" lengthAdjust="spacing" stroke="#ffffff" stroke-width="0.25">04:32:36</text><text x="357.00" y="360.44" font-size="13.2" fill="#ffffff" textLength="27.60" lengthAdjust="spacing" stroke="#ffffff" stroke-width="0.25">Cool</text><text x="467.80" y="360.44" font-size="13.2" fill="#ffffff" textLength="58.60" lengthAdjust="spacing" stroke="#ffffff" stroke-width="0.25">Hot Shots</text><text x="12.50" y="383.88" font-size="13.8" fill="#4b4b4b" stroke="#4b4b4b" stroke-width="0.25">7</text><text x="59.90" y="383.88" font-size="13.8" fill="#4b4b4b" stroke="#4b4b4b" stroke-width="0.25">0</text><text x="108.50" y="383.88" font-size="13.8" fill="#4b4b4b" textLength="54.04" lengthAdjust="spacing" stroke="#4b4b4b" stroke-width="0.25">31:19:40</text><text x="177.70" y="383.88" font-size="13.8" fill="#4b4b4b" textLength="54.04" lengthAdjust="spacing" stroke="#4b4b4b" stroke-width="0.25">00:02:00</text><text x="246.60" y="383.88" font-size="13.2" fill="#4b4b4b" textLength="93.00" lengthAdjust="spacingAndGlyphs" stroke="#4b4b4b" stroke-width="0.25">USQDJ0900007</text><text x="59.90" y="407.32" font-size="13.8" fill="#4b4b4b" stroke="#4b4b4b" stroke-width="0.25">1</text><text x="108.50" y="407.32" font-size="13.8" fill="#4b4b4b" textLength="54.04" lengthAdjust="spacing" stroke="#4b4b4b" stroke-width="0.25">31:21:40</text><text x="177.70" y="407.32" font-size="13.8" fill="#4b4b4b" textLength="54.04" lengthAdjust="spacing" stroke="#4b4b4b" stroke-width="0.25">08:24:61</text><text x="357.00" y="407.32" font-size="13.2" fill="#4b4b4b" textLength="41.00" lengthAdjust="spacingAndGlyphs" stroke="#4b4b4b" stroke-width="0.25">Smoke</text><text x="467.80" y="407.32" font-size="13.2" fill="#4b4b4b" textLength="58.60" lengthAdjust="spacing" stroke="#4b4b4b" stroke-width="0.25">Hot Shots</text><text x="12.50" y="430.76" font-size="13.8" fill="#4b4b4b" stroke="#4b4b4b" stroke-width="0.25">8</text><text x="59.90" y="430.76" font-size="13.8" fill="#4b4b4b" stroke="#4b4b4b" stroke-width="0.25">0</text><text x="108.50" y="430.76" font-size="13.8" fill="#4b4b4b" textLength="54.04" lengthAdjust="spacing" stroke="#4b4b4b" stroke-width="0.25">39:46:26</text><text x="177.70" y="430.76" font-size="13.8" fill="#4b4b4b" textLength="54.04" lengthAdjust="spacing" stroke="#4b4b4b" stroke-width="0.25">00:02:00</text><text x="246.60" y="430.76" font-size="13.2" fill="#4b4b4b" textLength="93.00" lengthAdjust="spacingAndGlyphs" stroke="#4b4b4b" stroke-width="0.25">USQDJ0900008</text><text x="59.90" y="454.20" font-size="13.8" fill="#4b4b4b" stroke="#4b4b4b" stroke-width="0.25">1</text><text x="108.50" y="454.20" font-size="13.8" fill="#4b4b4b" textLength="54.04" lengthAdjust="spacing" stroke="#4b4b4b" stroke-width="0.25">39:48:26</text><text x="177.70" y="454.20" font-size="13.8" fill="#4b4b4b" textLength="54.04" lengthAdjust="spacing" stroke="#4b4b4b" stroke-width="0.25">05:24:23</text><text x="357.00" y="454.20" font-size="13.2" fill="#4b4b4b" textLength="74.20" lengthAdjust="spacing" stroke="#4b4b4b" stroke-width="0.25">Burning Fire</text><text x="467.80" y="454.20" font-size="13.2" fill="#4b4b4b" textLength="58.60" lengthAdjust="spacing" stroke="#4b4b4b" stroke-width="0.25">Hot Shots</text><text x="12.50" y="477.64" font-size="13.8" fill="#4b4b4b" stroke="#4b4b4b" stroke-width="0.25">9</text><text x="59.90" y="477.64" font-size="13.8" fill="#4b4b4b" stroke="#4b4b4b" stroke-width="0.25">0</text><text x="108.50" y="477.64" font-size="13.8" fill="#4b4b4b" textLength="54.04" lengthAdjust="spacing" stroke="#4b4b4b" stroke-width="0.25">45:12:49</text><text x="177.70" y="477.64" font-size="13.8" fill="#4b4b4b" textLength="54.04" lengthAdjust="spacing" stroke="#4b4b4b" stroke-width="0.25">00:02:00</text><text x="246.60" y="477.64" font-size="13.2" fill="#4b4b4b" textLength="93.00" lengthAdjust="spacingAndGlyphs" stroke="#4b4b4b" stroke-width="0.25">USQDJ0900009</text><text x="59.90" y="501.08" font-size="13.8" fill="#4b4b4b" stroke="#4b4b4b" stroke-width="0.25">1</text><text x="108.50" y="501.08" font-size="13.8" fill="#4b4b4b" textLength="54.04" lengthAdjust="spacing" stroke="#4b4b4b" stroke-width="0.25">45:14:49</text><text x="177.70" y="501.08" font-size="13.8" fill="#4b4b4b" textLength="54.04" lengthAdjust="spacing" stroke="#4b4b4b" stroke-width="0.25">06:42:18</text><text x="357.00" y="501.08" font-size="13.2" fill="#4b4b4b" textLength="81.40" lengthAdjust="spacing" stroke="#4b4b4b" stroke-width="0.25">Hot, Hot, Hot</text><text x="467.80" y="501.08" font-size="13.2" fill="#4b4b4b" textLength="58.60" lengthAdjust="spacing" stroke="#4b4b4b" stroke-width="0.25">Hot Shots</text><text x="9.70" y="782.70" font-size="10.2" fill="#fff" font-weight="bold" font-family="Liberation Serif, serif">1</text><text x="95.70" y="782.70" font-size="10.2" fill="#fff" font-weight="bold" font-family="Liberation Serif, serif">1</text><text x="203.20" y="782.70" font-size="10.2" fill="#fff" font-weight="bold" font-family="Liberation Serif, serif">1</text><text x="272.90" y="782.70" font-size="10.2" fill="#fff" font-weight="bold" font-family="Liberation Serif, serif">1</text><text x="382.30" y="782.70" font-size="10.2" fill="#fff" font-weight="bold" font-family="Liberation Serif, serif">1</text><text x="508.60" y="782.70" font-size="10.2" fill="#fff" font-weight="bold" font-family="Liberation Serif, serif">1</text><text x="594.30" y="782.70" font-size="10.2" fill="#fff" font-weight="bold" font-family="Liberation Serif, serif">1</text><text x="751.50" y="782.70" font-size="10.2" fill="#fff" font-weight="bold" font-family="Liberation Serif, serif">1</text><text x="852.30" y="782.70" font-size="10.2" fill="#fff" font-weight="bold" font-family="Liberation Serif, serif">1</text><text x="563.00" y="832.00" font-size="36.3" fill="#4a4a4a" textLength="87.50" lengthAdjust="spacingAndGlyphs">00:06</text><text x="16.50" y="867.70" font-size="14.2" fill="#3c3c3c" textLength="363.00" lengthAdjust="spacingAndGlyphs" stroke="#3c3c3c" stroke-width="0.15">Registered to Pieter Stenekes - Sonoris Audio Engineering</text><text x="1048.00" y="95.10" font-size="14.3" fill="#3f3f3f" text-anchor="end" textLength="27.40" lengthAdjust="spacing">Title</text><text x="1048.00" y="127.10" font-size="14.3" fill="#3f3f3f" text-anchor="end" textLength="63.70" lengthAdjust="spacing">Performer</text><text x="1048.00" y="158.90" font-size="14.3" fill="#3f3f3f" text-anchor="end" textLength="28.50" lengthAdjust="spacingAndGlyphs">MCN</text><text x="1059.60" y="94.00" font-size="12.2" fill="#444" textLength="73.20" lengthAdjust="spacing" stroke="#444" stroke-width="0.25">Fire Burning</text><text x="1059.60" y="125.80" font-size="12.2" fill="#444" textLength="58.60" lengthAdjust="spacing" stroke="#444" stroke-width="0.25">Hot Shots</text><text x="1059.80" y="157.80" font-size="12.2" fill="#444" textLength="102.60" lengthAdjust="spacing" stroke="#444" stroke-width="0.25">0813285908925</text><text x="1075.00" y="192.20" font-size="14.5" fill="#fff" textLength="86.00" lengthAdjust="spacingAndGlyphs">Show CD Text</text><text x="1023.00" y="222.90" font-size="14" fill="#444" textLength="77.00" lengthAdjust="spacing">Total Length</text><text x="1112.40" y="222.40" font-size="13.2" fill="#444" textLength="52.20" lengthAdjust="spacing">51:56:67</text><text x="1081.30" y="351.90" font-size="11.4" fill="#454545" text-anchor="end" textLength="6.15" lengthAdjust="spacingAndGlyphs" stroke="#454545" stroke-width="0.2">0</text><text x="1081.30" y="489.10" font-size="11.4" fill="#454545" text-anchor="end" textLength="15.98" lengthAdjust="spacingAndGlyphs" stroke="#454545" stroke-width="0.2">-20</text><text x="1081.30" y="629.10" font-size="11.4" fill="#454545" text-anchor="end" textLength="15.98" lengthAdjust="spacingAndGlyphs" stroke="#454545" stroke-width="0.2">-40</text><text x="1081.30" y="768.00" font-size="11.4" fill="#454545" text-anchor="end" textLength="15.98" lengthAdjust="spacingAndGlyphs" stroke="#454545" stroke-width="0.2">-60</text><text x="1087.60" y="776.70" font-size="11.4" fill="#4a4a4a" textLength="5.60" lengthAdjust="spacingAndGlyphs">L</text><text x="1098.70" y="776.70" font-size="11.4" fill="#4a4a4a" textLength="6.90" lengthAdjust="spacingAndGlyphs">R</text></svg>
</div></body></html>
